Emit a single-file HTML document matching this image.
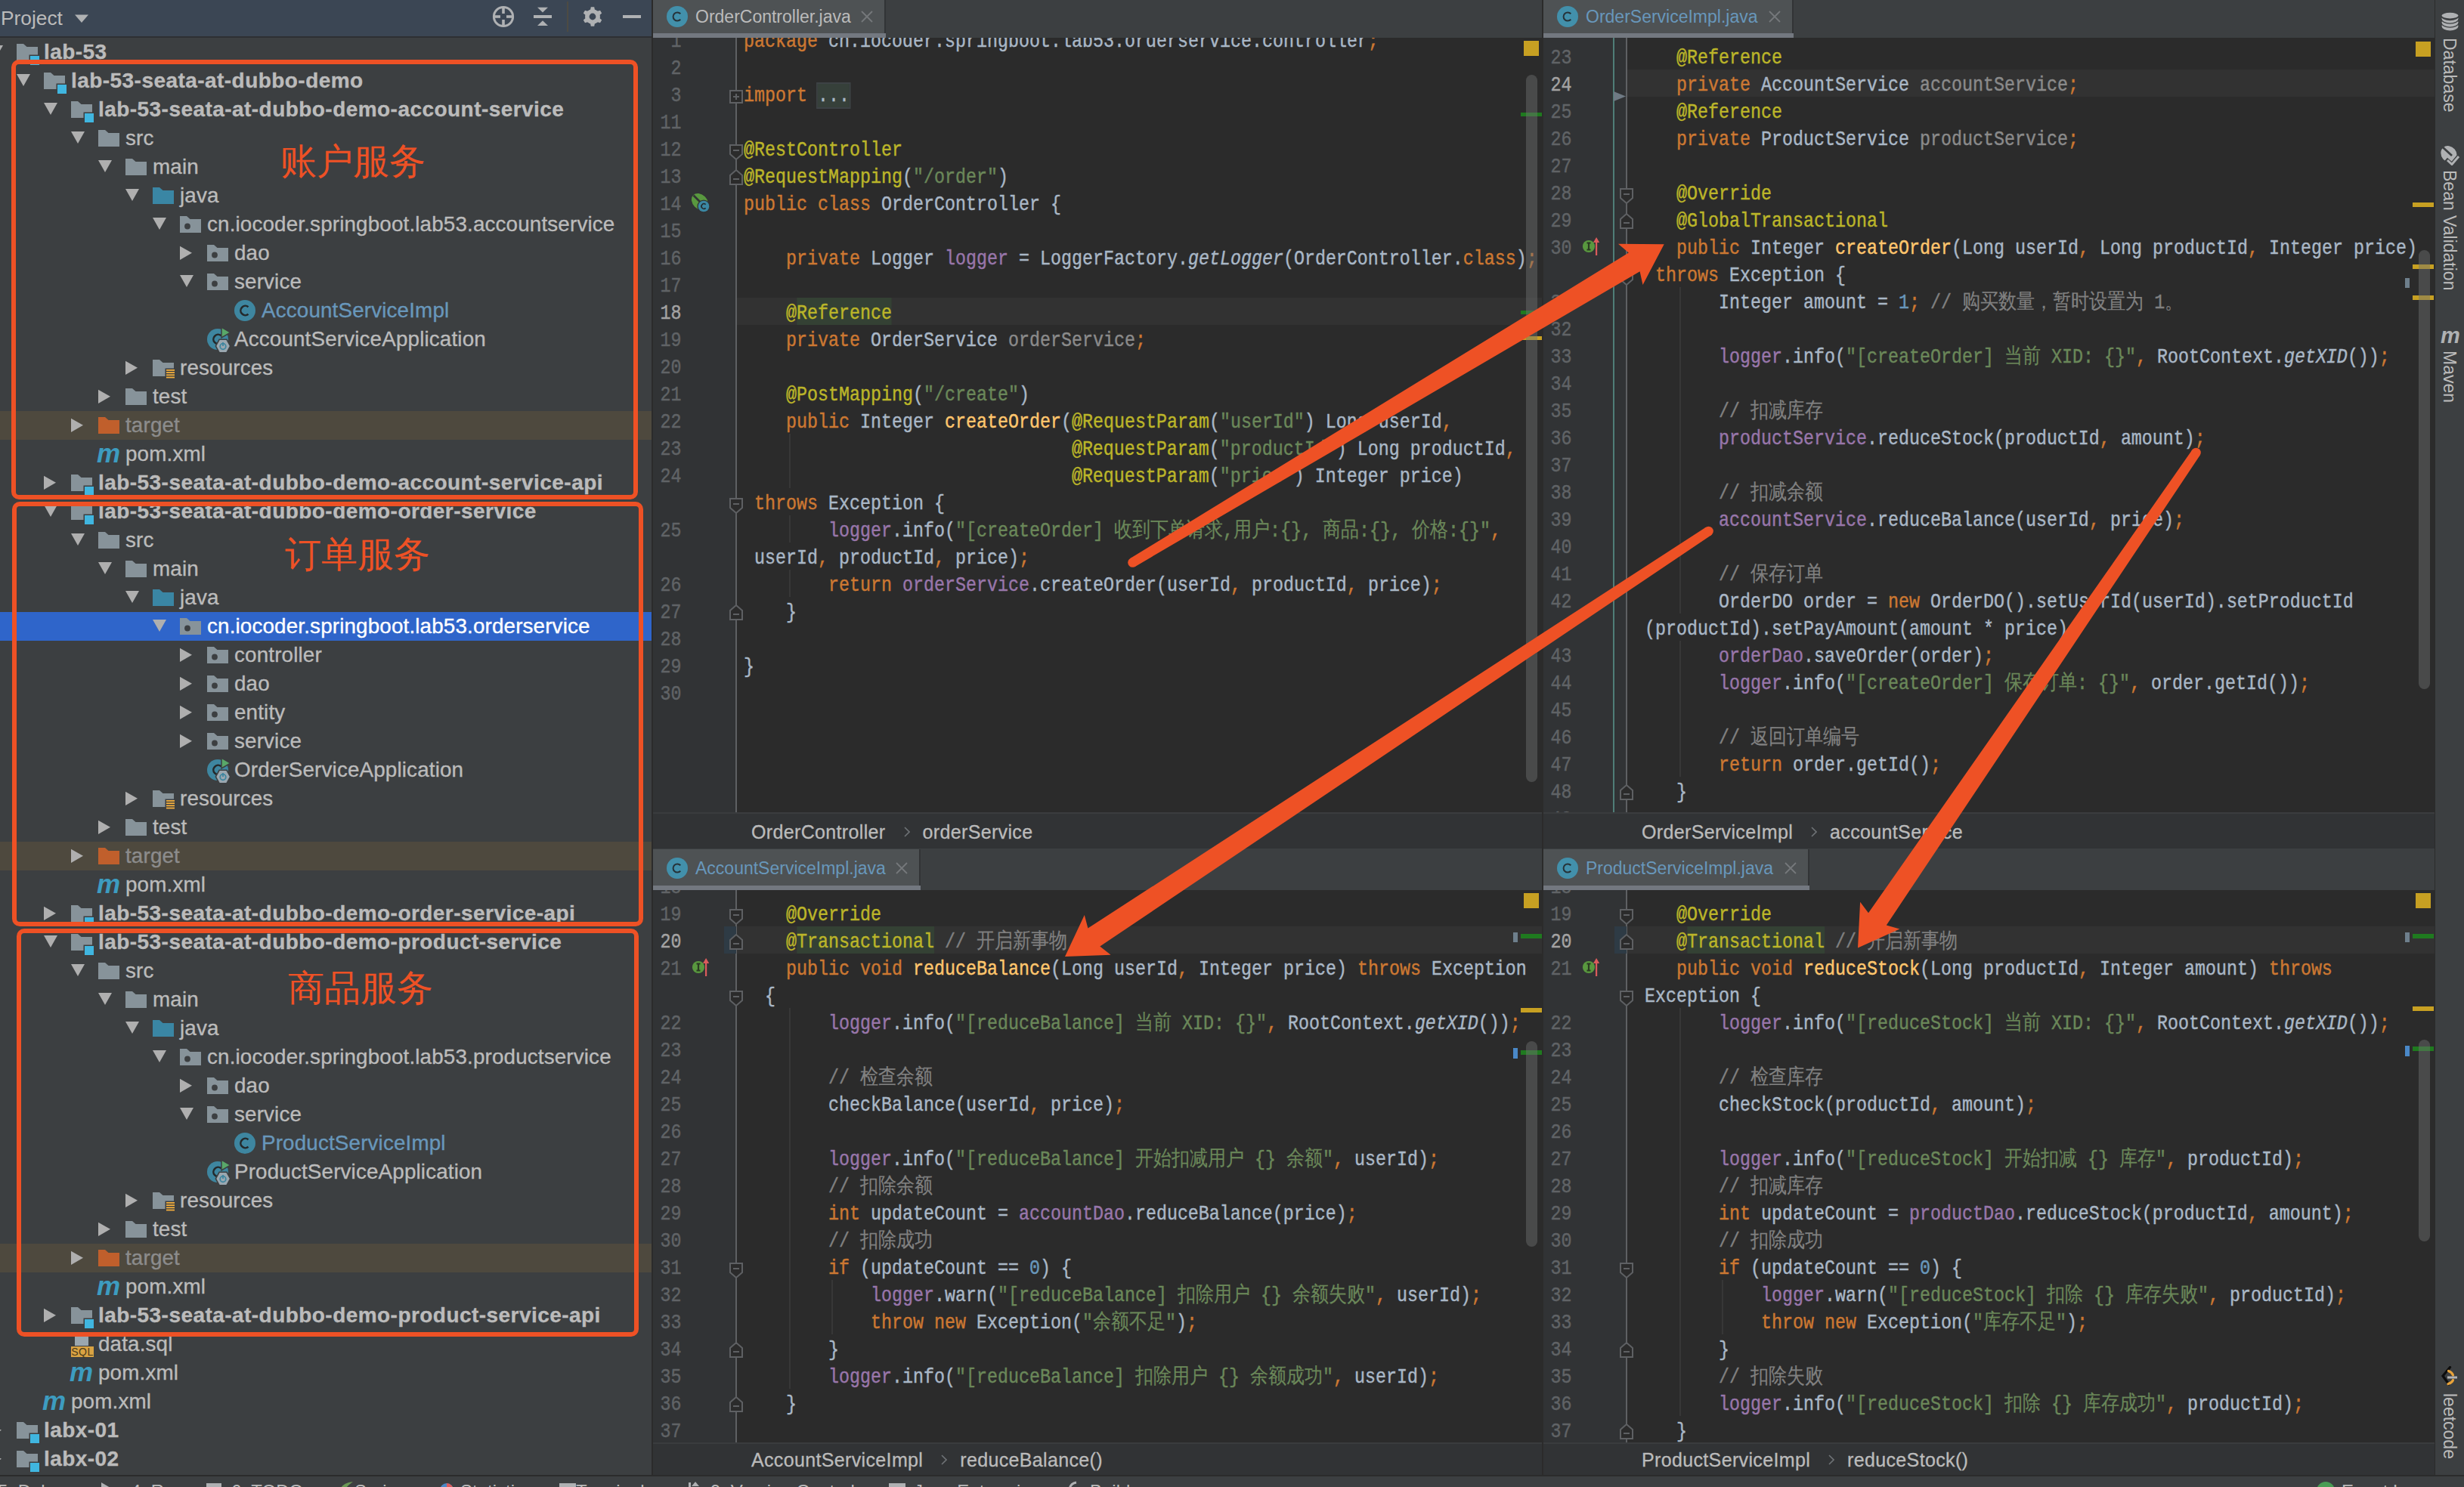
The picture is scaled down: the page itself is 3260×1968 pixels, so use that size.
<!DOCTYPE html><html><head><meta charset="utf-8"><style>
*{margin:0;padding:0;box-sizing:border-box}
html,body{width:3260px;height:1968px;overflow:hidden;background:#3c3f41}
body>div,body>svg,div>div,div>svg{position:absolute}
.t,.tb{font-family:'Liberation Sans',sans-serif;-webkit-text-stroke:0.35px currentColor;font-size:27.8px;letter-spacing:0.15px;line-height:38px;height:38px;white-space:pre}
.tb{font-weight:bold;font-size:28px;letter-spacing:0.45px}
.ui{font-family:'Liberation Sans',sans-serif;white-space:pre}
.crumb{-webkit-text-stroke:0.3px currentColor;font-size:25px;color:#bbbbbb;line-height:44px;letter-spacing:0.35px}
.code{font-family:'Liberation Mono',monospace;-webkit-text-stroke:0.45px currentColor;font-size:27.2px;line-height:36px;height:36px;white-space:pre;transform:scaleX(0.85784);transform-origin:0 0}
.ln{font-family:'Liberation Mono',monospace;-webkit-text-stroke:0.45px currentColor;font-size:27.2px;line-height:36px;height:36px;text-align:right;white-space:pre;transform:scaleX(0.85784);transform-origin:100% 0}
.cj{font-size:27.55px;-webkit-text-stroke:0.2px currentColor}
</style></head><body><div style="left:0px;top:0px;width:862px;height:1968px;background:#3c3f41;"></div>
<svg style="left:-14px;top:50px" width="20" height="38" viewBox="0 0 20 38"><path d="M0 10 H18 L9 26 Z" fill="#afafaf"/></svg>
<svg style="left:22px;top:50px" width="34" height="38" viewBox="0 0 34 38"><path d="M0 8 H9 L13.5 12 H28 V30 H0 Z" fill="#87939a"/><rect x="16.5" y="22.5" width="15" height="15" fill="#3c3f41"/><rect x="18" y="24" width="12" height="12" fill="#40b6e0"/></svg>
<div class="tb" style="left:58px;top:50px;color:#bbbbbb">lab-53</div>
<svg style="left:22px;top:88px" width="20" height="38" viewBox="0 0 20 38"><path d="M0 10 H18 L9 26 Z" fill="#afafaf"/></svg>
<svg style="left:58px;top:88px" width="34" height="38" viewBox="0 0 34 38"><path d="M0 8 H9 L13.5 12 H28 V30 H0 Z" fill="#87939a"/><rect x="16.5" y="22.5" width="15" height="15" fill="#3c3f41"/><rect x="18" y="24" width="12" height="12" fill="#40b6e0"/></svg>
<div class="tb" style="left:94px;top:88px;color:#bbbbbb">lab-53-seata-at-dubbo-demo</div>
<svg style="left:58px;top:126px" width="20" height="38" viewBox="0 0 20 38"><path d="M0 10 H18 L9 26 Z" fill="#afafaf"/></svg>
<svg style="left:94px;top:126px" width="34" height="38" viewBox="0 0 34 38"><path d="M0 8 H9 L13.5 12 H28 V30 H0 Z" fill="#87939a"/><rect x="16.5" y="22.5" width="15" height="15" fill="#3c3f41"/><rect x="18" y="24" width="12" height="12" fill="#40b6e0"/></svg>
<div class="tb" style="left:130px;top:126px;color:#bbbbbb">lab-53-seata-at-dubbo-demo-account-service</div>
<svg style="left:94px;top:164px" width="20" height="38" viewBox="0 0 20 38"><path d="M0 10 H18 L9 26 Z" fill="#afafaf"/></svg>
<svg style="left:130px;top:164px" width="34" height="38" viewBox="0 0 34 38"><path d="M0 8 H9 L13.5 12 H28 V30 H0 Z" fill="#87939a"/></svg>
<div class="t" style="left:166px;top:164px;color:#bbbbbb">src</div>
<svg style="left:130px;top:202px" width="20" height="38" viewBox="0 0 20 38"><path d="M0 10 H18 L9 26 Z" fill="#afafaf"/></svg>
<svg style="left:166px;top:202px" width="34" height="38" viewBox="0 0 34 38"><path d="M0 8 H9 L13.5 12 H28 V30 H0 Z" fill="#87939a"/></svg>
<div class="t" style="left:202px;top:202px;color:#bbbbbb">main</div>
<svg style="left:166px;top:240px" width="20" height="38" viewBox="0 0 20 38"><path d="M0 10 H18 L9 26 Z" fill="#afafaf"/></svg>
<svg style="left:202px;top:240px" width="34" height="38" viewBox="0 0 34 38"><path d="M0 8 H9 L13.5 12 H28 V30 H0 Z" fill="#3a86a4"/></svg>
<div class="t" style="left:238px;top:240px;color:#bbbbbb">java</div>
<svg style="left:202px;top:278px" width="20" height="38" viewBox="0 0 20 38"><path d="M0 10 H18 L9 26 Z" fill="#afafaf"/></svg>
<svg style="left:238px;top:278px" width="34" height="38" viewBox="0 0 34 38"><path d="M0 8 H9 L13.5 12 H28 V30 H0 Z" fill="#87939a"/><circle cx="10" cy="21.5" r="3.9" fill="#3c3f41"/></svg>
<div class="t" style="left:274px;top:278px;color:#bbbbbb">cn.iocoder.springboot.lab53.accountservice</div>
<svg style="left:238px;top:316px" width="20" height="38" viewBox="0 0 20 38"><path d="M0 9.7 L16 18.85 L0 28 Z" fill="#afafaf"/></svg>
<svg style="left:274px;top:316px" width="34" height="38" viewBox="0 0 34 38"><path d="M0 8 H9 L13.5 12 H28 V30 H0 Z" fill="#87939a"/><circle cx="10" cy="21.5" r="3.9" fill="#3c3f41"/></svg>
<div class="t" style="left:310px;top:316px;color:#bbbbbb">dao</div>
<svg style="left:238px;top:354px" width="20" height="38" viewBox="0 0 20 38"><path d="M0 10 H18 L9 26 Z" fill="#afafaf"/></svg>
<svg style="left:274px;top:354px" width="34" height="38" viewBox="0 0 34 38"><path d="M0 8 H9 L13.5 12 H28 V30 H0 Z" fill="#87939a"/><circle cx="10" cy="21.5" r="3.9" fill="#3c3f41"/></svg>
<div class="t" style="left:310px;top:354px;color:#bbbbbb">service</div>
<svg style="left:310px;top:392px" width="34" height="38" viewBox="0 0 34 38"><circle cx="14" cy="19" r="14" fill="#3e86a0"/><path d="M18.5 14.2 A6.2 6.2 0 1 0 18.5 23.8" fill="none" stroke="#24292b" stroke-width="2.6"/></svg>
<div class="t" style="left:346px;top:392px;color:#6897bb">AccountServiceImpl</div>
<svg style="left:274px;top:430px" width="34" height="38" viewBox="0 0 34 38"><circle cx="14" cy="19" r="14" fill="#3e86a0"/><path d="M18.5 14.2 A6.2 6.2 0 1 0 18.5 23.8" fill="none" stroke="#24292b" stroke-width="2.6"/><path d="M19 3 L31 10 L19 17 Z" fill="#59a869" stroke="#3c3f41" stroke-width="1.5"/><path d="M10.5 28 L15.7 18.5 H26.4 L31.5 28 L26.4 37.5 H15.7 Z" fill="#3c3f41"/><path d="M12.3 28 L16.7 20 H25.4 L29.8 28 L25.4 36 H16.7 Z" fill="#9aa7b0"/><circle cx="21" cy="28.5" r="3.8" fill="none" stroke="#3e86a0" stroke-width="1.8"/><rect x="20.1" y="23" width="1.8" height="5" fill="#3e86a0"/></svg>
<div class="t" style="left:310px;top:430px;color:#bbbbbb">AccountServiceApplication</div>
<svg style="left:166px;top:468px" width="20" height="38" viewBox="0 0 20 38"><path d="M0 9.7 L16 18.85 L0 28 Z" fill="#afafaf"/></svg>
<svg style="left:202px;top:468px" width="34" height="38" viewBox="0 0 34 38"><path d="M0 8 H9 L13.5 12 H28 V30 H0 Z" fill="#87939a"/><rect x="16.5" y="19.5" width="14" height="14" fill="#3c3f41"/><rect x="18" y="21.0" width="11" height="1.8" fill="#f4af3d"/><rect x="18" y="24.2" width="11" height="1.8" fill="#f4af3d"/><rect x="18" y="27.4" width="11" height="1.8" fill="#f4af3d"/><rect x="18" y="30.6" width="11" height="1.8" fill="#f4af3d"/></svg>
<div class="t" style="left:238px;top:468px;color:#bbbbbb">resources</div>
<svg style="left:130px;top:506px" width="20" height="38" viewBox="0 0 20 38"><path d="M0 9.7 L16 18.85 L0 28 Z" fill="#afafaf"/></svg>
<svg style="left:166px;top:506px" width="34" height="38" viewBox="0 0 34 38"><path d="M0 8 H9 L13.5 12 H28 V30 H0 Z" fill="#87939a"/></svg>
<div class="t" style="left:202px;top:506px;color:#bbbbbb">test</div>
<div style="left:0px;top:544px;width:862px;height:38px;background:#4e493e;"></div>
<svg style="left:94px;top:544px" width="20" height="38" viewBox="0 0 20 38"><path d="M0 9.7 L16 18.85 L0 28 Z" fill="#afafaf"/></svg>
<svg style="left:130px;top:544px" width="34" height="38" viewBox="0 0 34 38"><path d="M0 8 H9 L13.5 12 H28 V30 H0 Z" fill="#c05f2c"/></svg>
<div class="t" style="left:166px;top:544px;color:#8c8c8c">target</div>
<div style="left:128px;top:583px;font:italic bold 35px 'Liberation Sans';color:#3d9cc0;line-height:34px;letter-spacing:-1px">m</div>
<div class="t" style="left:166px;top:582px;color:#bbbbbb">pom.xml</div>
<svg style="left:58px;top:620px" width="20" height="38" viewBox="0 0 20 38"><path d="M0 9.7 L16 18.85 L0 28 Z" fill="#afafaf"/></svg>
<svg style="left:94px;top:620px" width="34" height="38" viewBox="0 0 34 38"><path d="M0 8 H9 L13.5 12 H28 V30 H0 Z" fill="#87939a"/><rect x="16.5" y="22.5" width="15" height="15" fill="#3c3f41"/><rect x="18" y="24" width="12" height="12" fill="#40b6e0"/></svg>
<div class="tb" style="left:130px;top:620px;color:#bbbbbb">lab-53-seata-at-dubbo-demo-account-service-api</div>
<svg style="left:58px;top:658px" width="20" height="38" viewBox="0 0 20 38"><path d="M0 10 H18 L9 26 Z" fill="#afafaf"/></svg>
<svg style="left:94px;top:658px" width="34" height="38" viewBox="0 0 34 38"><path d="M0 8 H9 L13.5 12 H28 V30 H0 Z" fill="#87939a"/><rect x="16.5" y="22.5" width="15" height="15" fill="#3c3f41"/><rect x="18" y="24" width="12" height="12" fill="#40b6e0"/></svg>
<div class="tb" style="left:130px;top:658px;color:#bbbbbb">lab-53-seata-at-dubbo-demo-order-service</div>
<svg style="left:94px;top:696px" width="20" height="38" viewBox="0 0 20 38"><path d="M0 10 H18 L9 26 Z" fill="#afafaf"/></svg>
<svg style="left:130px;top:696px" width="34" height="38" viewBox="0 0 34 38"><path d="M0 8 H9 L13.5 12 H28 V30 H0 Z" fill="#87939a"/></svg>
<div class="t" style="left:166px;top:696px;color:#bbbbbb">src</div>
<svg style="left:130px;top:734px" width="20" height="38" viewBox="0 0 20 38"><path d="M0 10 H18 L9 26 Z" fill="#afafaf"/></svg>
<svg style="left:166px;top:734px" width="34" height="38" viewBox="0 0 34 38"><path d="M0 8 H9 L13.5 12 H28 V30 H0 Z" fill="#87939a"/></svg>
<div class="t" style="left:202px;top:734px;color:#bbbbbb">main</div>
<svg style="left:166px;top:772px" width="20" height="38" viewBox="0 0 20 38"><path d="M0 10 H18 L9 26 Z" fill="#afafaf"/></svg>
<svg style="left:202px;top:772px" width="34" height="38" viewBox="0 0 34 38"><path d="M0 8 H9 L13.5 12 H28 V30 H0 Z" fill="#3a86a4"/></svg>
<div class="t" style="left:238px;top:772px;color:#bbbbbb">java</div>
<div style="left:0px;top:810px;width:862px;height:38px;background:#2f65ca;"></div>
<svg style="left:202px;top:810px" width="20" height="38" viewBox="0 0 20 38"><path d="M0 10 H18 L9 26 Z" fill="#afafaf"/></svg>
<svg style="left:238px;top:810px" width="34" height="38" viewBox="0 0 34 38"><path d="M0 8 H9 L13.5 12 H28 V30 H0 Z" fill="#87939a"/><circle cx="10" cy="21.5" r="3.9" fill="#3c3f41"/></svg>
<div class="t" style="left:274px;top:810px;color:#ffffff">cn.iocoder.springboot.lab53.orderservice</div>
<svg style="left:238px;top:848px" width="20" height="38" viewBox="0 0 20 38"><path d="M0 9.7 L16 18.85 L0 28 Z" fill="#afafaf"/></svg>
<svg style="left:274px;top:848px" width="34" height="38" viewBox="0 0 34 38"><path d="M0 8 H9 L13.5 12 H28 V30 H0 Z" fill="#87939a"/><circle cx="10" cy="21.5" r="3.9" fill="#3c3f41"/></svg>
<div class="t" style="left:310px;top:848px;color:#bbbbbb">controller</div>
<svg style="left:238px;top:886px" width="20" height="38" viewBox="0 0 20 38"><path d="M0 9.7 L16 18.85 L0 28 Z" fill="#afafaf"/></svg>
<svg style="left:274px;top:886px" width="34" height="38" viewBox="0 0 34 38"><path d="M0 8 H9 L13.5 12 H28 V30 H0 Z" fill="#87939a"/><circle cx="10" cy="21.5" r="3.9" fill="#3c3f41"/></svg>
<div class="t" style="left:310px;top:886px;color:#bbbbbb">dao</div>
<svg style="left:238px;top:924px" width="20" height="38" viewBox="0 0 20 38"><path d="M0 9.7 L16 18.85 L0 28 Z" fill="#afafaf"/></svg>
<svg style="left:274px;top:924px" width="34" height="38" viewBox="0 0 34 38"><path d="M0 8 H9 L13.5 12 H28 V30 H0 Z" fill="#87939a"/><circle cx="10" cy="21.5" r="3.9" fill="#3c3f41"/></svg>
<div class="t" style="left:310px;top:924px;color:#bbbbbb">entity</div>
<svg style="left:238px;top:962px" width="20" height="38" viewBox="0 0 20 38"><path d="M0 9.7 L16 18.85 L0 28 Z" fill="#afafaf"/></svg>
<svg style="left:274px;top:962px" width="34" height="38" viewBox="0 0 34 38"><path d="M0 8 H9 L13.5 12 H28 V30 H0 Z" fill="#87939a"/><circle cx="10" cy="21.5" r="3.9" fill="#3c3f41"/></svg>
<div class="t" style="left:310px;top:962px;color:#bbbbbb">service</div>
<svg style="left:274px;top:1000px" width="34" height="38" viewBox="0 0 34 38"><circle cx="14" cy="19" r="14" fill="#3e86a0"/><path d="M18.5 14.2 A6.2 6.2 0 1 0 18.5 23.8" fill="none" stroke="#24292b" stroke-width="2.6"/><path d="M19 3 L31 10 L19 17 Z" fill="#59a869" stroke="#3c3f41" stroke-width="1.5"/><path d="M10.5 28 L15.7 18.5 H26.4 L31.5 28 L26.4 37.5 H15.7 Z" fill="#3c3f41"/><path d="M12.3 28 L16.7 20 H25.4 L29.8 28 L25.4 36 H16.7 Z" fill="#9aa7b0"/><circle cx="21" cy="28.5" r="3.8" fill="none" stroke="#3e86a0" stroke-width="1.8"/><rect x="20.1" y="23" width="1.8" height="5" fill="#3e86a0"/></svg>
<div class="t" style="left:310px;top:1000px;color:#bbbbbb">OrderServiceApplication</div>
<svg style="left:166px;top:1038px" width="20" height="38" viewBox="0 0 20 38"><path d="M0 9.7 L16 18.85 L0 28 Z" fill="#afafaf"/></svg>
<svg style="left:202px;top:1038px" width="34" height="38" viewBox="0 0 34 38"><path d="M0 8 H9 L13.5 12 H28 V30 H0 Z" fill="#87939a"/><rect x="16.5" y="19.5" width="14" height="14" fill="#3c3f41"/><rect x="18" y="21.0" width="11" height="1.8" fill="#f4af3d"/><rect x="18" y="24.2" width="11" height="1.8" fill="#f4af3d"/><rect x="18" y="27.4" width="11" height="1.8" fill="#f4af3d"/><rect x="18" y="30.6" width="11" height="1.8" fill="#f4af3d"/></svg>
<div class="t" style="left:238px;top:1038px;color:#bbbbbb">resources</div>
<svg style="left:130px;top:1076px" width="20" height="38" viewBox="0 0 20 38"><path d="M0 9.7 L16 18.85 L0 28 Z" fill="#afafaf"/></svg>
<svg style="left:166px;top:1076px" width="34" height="38" viewBox="0 0 34 38"><path d="M0 8 H9 L13.5 12 H28 V30 H0 Z" fill="#87939a"/></svg>
<div class="t" style="left:202px;top:1076px;color:#bbbbbb">test</div>
<div style="left:0px;top:1114px;width:862px;height:38px;background:#4e493e;"></div>
<svg style="left:94px;top:1114px" width="20" height="38" viewBox="0 0 20 38"><path d="M0 9.7 L16 18.85 L0 28 Z" fill="#afafaf"/></svg>
<svg style="left:130px;top:1114px" width="34" height="38" viewBox="0 0 34 38"><path d="M0 8 H9 L13.5 12 H28 V30 H0 Z" fill="#c05f2c"/></svg>
<div class="t" style="left:166px;top:1114px;color:#8c8c8c">target</div>
<div style="left:128px;top:1153px;font:italic bold 35px 'Liberation Sans';color:#3d9cc0;line-height:34px;letter-spacing:-1px">m</div>
<div class="t" style="left:166px;top:1152px;color:#bbbbbb">pom.xml</div>
<svg style="left:58px;top:1190px" width="20" height="38" viewBox="0 0 20 38"><path d="M0 9.7 L16 18.85 L0 28 Z" fill="#afafaf"/></svg>
<svg style="left:94px;top:1190px" width="34" height="38" viewBox="0 0 34 38"><path d="M0 8 H9 L13.5 12 H28 V30 H0 Z" fill="#87939a"/><rect x="16.5" y="22.5" width="15" height="15" fill="#3c3f41"/><rect x="18" y="24" width="12" height="12" fill="#40b6e0"/></svg>
<div class="tb" style="left:130px;top:1190px;color:#bbbbbb">lab-53-seata-at-dubbo-demo-order-service-api</div>
<svg style="left:58px;top:1228px" width="20" height="38" viewBox="0 0 20 38"><path d="M0 10 H18 L9 26 Z" fill="#afafaf"/></svg>
<svg style="left:94px;top:1228px" width="34" height="38" viewBox="0 0 34 38"><path d="M0 8 H9 L13.5 12 H28 V30 H0 Z" fill="#87939a"/><rect x="16.5" y="22.5" width="15" height="15" fill="#3c3f41"/><rect x="18" y="24" width="12" height="12" fill="#40b6e0"/></svg>
<div class="tb" style="left:130px;top:1228px;color:#bbbbbb">lab-53-seata-at-dubbo-demo-product-service</div>
<svg style="left:94px;top:1266px" width="20" height="38" viewBox="0 0 20 38"><path d="M0 10 H18 L9 26 Z" fill="#afafaf"/></svg>
<svg style="left:130px;top:1266px" width="34" height="38" viewBox="0 0 34 38"><path d="M0 8 H9 L13.5 12 H28 V30 H0 Z" fill="#87939a"/></svg>
<div class="t" style="left:166px;top:1266px;color:#bbbbbb">src</div>
<svg style="left:130px;top:1304px" width="20" height="38" viewBox="0 0 20 38"><path d="M0 10 H18 L9 26 Z" fill="#afafaf"/></svg>
<svg style="left:166px;top:1304px" width="34" height="38" viewBox="0 0 34 38"><path d="M0 8 H9 L13.5 12 H28 V30 H0 Z" fill="#87939a"/></svg>
<div class="t" style="left:202px;top:1304px;color:#bbbbbb">main</div>
<svg style="left:166px;top:1342px" width="20" height="38" viewBox="0 0 20 38"><path d="M0 10 H18 L9 26 Z" fill="#afafaf"/></svg>
<svg style="left:202px;top:1342px" width="34" height="38" viewBox="0 0 34 38"><path d="M0 8 H9 L13.5 12 H28 V30 H0 Z" fill="#3a86a4"/></svg>
<div class="t" style="left:238px;top:1342px;color:#bbbbbb">java</div>
<svg style="left:202px;top:1380px" width="20" height="38" viewBox="0 0 20 38"><path d="M0 10 H18 L9 26 Z" fill="#afafaf"/></svg>
<svg style="left:238px;top:1380px" width="34" height="38" viewBox="0 0 34 38"><path d="M0 8 H9 L13.5 12 H28 V30 H0 Z" fill="#87939a"/><circle cx="10" cy="21.5" r="3.9" fill="#3c3f41"/></svg>
<div class="t" style="left:274px;top:1380px;color:#bbbbbb">cn.iocoder.springboot.lab53.productservice</div>
<svg style="left:238px;top:1418px" width="20" height="38" viewBox="0 0 20 38"><path d="M0 9.7 L16 18.85 L0 28 Z" fill="#afafaf"/></svg>
<svg style="left:274px;top:1418px" width="34" height="38" viewBox="0 0 34 38"><path d="M0 8 H9 L13.5 12 H28 V30 H0 Z" fill="#87939a"/><circle cx="10" cy="21.5" r="3.9" fill="#3c3f41"/></svg>
<div class="t" style="left:310px;top:1418px;color:#bbbbbb">dao</div>
<svg style="left:238px;top:1456px" width="20" height="38" viewBox="0 0 20 38"><path d="M0 10 H18 L9 26 Z" fill="#afafaf"/></svg>
<svg style="left:274px;top:1456px" width="34" height="38" viewBox="0 0 34 38"><path d="M0 8 H9 L13.5 12 H28 V30 H0 Z" fill="#87939a"/><circle cx="10" cy="21.5" r="3.9" fill="#3c3f41"/></svg>
<div class="t" style="left:310px;top:1456px;color:#bbbbbb">service</div>
<svg style="left:310px;top:1494px" width="34" height="38" viewBox="0 0 34 38"><circle cx="14" cy="19" r="14" fill="#3e86a0"/><path d="M18.5 14.2 A6.2 6.2 0 1 0 18.5 23.8" fill="none" stroke="#24292b" stroke-width="2.6"/></svg>
<div class="t" style="left:346px;top:1494px;color:#6897bb">ProductServiceImpl</div>
<svg style="left:274px;top:1532px" width="34" height="38" viewBox="0 0 34 38"><circle cx="14" cy="19" r="14" fill="#3e86a0"/><path d="M18.5 14.2 A6.2 6.2 0 1 0 18.5 23.8" fill="none" stroke="#24292b" stroke-width="2.6"/><path d="M19 3 L31 10 L19 17 Z" fill="#59a869" stroke="#3c3f41" stroke-width="1.5"/><path d="M10.5 28 L15.7 18.5 H26.4 L31.5 28 L26.4 37.5 H15.7 Z" fill="#3c3f41"/><path d="M12.3 28 L16.7 20 H25.4 L29.8 28 L25.4 36 H16.7 Z" fill="#9aa7b0"/><circle cx="21" cy="28.5" r="3.8" fill="none" stroke="#3e86a0" stroke-width="1.8"/><rect x="20.1" y="23" width="1.8" height="5" fill="#3e86a0"/></svg>
<div class="t" style="left:310px;top:1532px;color:#bbbbbb">ProductServiceApplication</div>
<svg style="left:166px;top:1570px" width="20" height="38" viewBox="0 0 20 38"><path d="M0 9.7 L16 18.85 L0 28 Z" fill="#afafaf"/></svg>
<svg style="left:202px;top:1570px" width="34" height="38" viewBox="0 0 34 38"><path d="M0 8 H9 L13.5 12 H28 V30 H0 Z" fill="#87939a"/><rect x="16.5" y="19.5" width="14" height="14" fill="#3c3f41"/><rect x="18" y="21.0" width="11" height="1.8" fill="#f4af3d"/><rect x="18" y="24.2" width="11" height="1.8" fill="#f4af3d"/><rect x="18" y="27.4" width="11" height="1.8" fill="#f4af3d"/><rect x="18" y="30.6" width="11" height="1.8" fill="#f4af3d"/></svg>
<div class="t" style="left:238px;top:1570px;color:#bbbbbb">resources</div>
<svg style="left:130px;top:1608px" width="20" height="38" viewBox="0 0 20 38"><path d="M0 9.7 L16 18.85 L0 28 Z" fill="#afafaf"/></svg>
<svg style="left:166px;top:1608px" width="34" height="38" viewBox="0 0 34 38"><path d="M0 8 H9 L13.5 12 H28 V30 H0 Z" fill="#87939a"/></svg>
<div class="t" style="left:202px;top:1608px;color:#bbbbbb">test</div>
<div style="left:0px;top:1646px;width:862px;height:38px;background:#4e493e;"></div>
<svg style="left:94px;top:1646px" width="20" height="38" viewBox="0 0 20 38"><path d="M0 9.7 L16 18.85 L0 28 Z" fill="#afafaf"/></svg>
<svg style="left:130px;top:1646px" width="34" height="38" viewBox="0 0 34 38"><path d="M0 8 H9 L13.5 12 H28 V30 H0 Z" fill="#c05f2c"/></svg>
<div class="t" style="left:166px;top:1646px;color:#8c8c8c">target</div>
<div style="left:128px;top:1685px;font:italic bold 35px 'Liberation Sans';color:#3d9cc0;line-height:34px;letter-spacing:-1px">m</div>
<div class="t" style="left:166px;top:1684px;color:#bbbbbb">pom.xml</div>
<svg style="left:58px;top:1722px" width="20" height="38" viewBox="0 0 20 38"><path d="M0 9.7 L16 18.85 L0 28 Z" fill="#afafaf"/></svg>
<svg style="left:94px;top:1722px" width="34" height="38" viewBox="0 0 34 38"><path d="M0 8 H9 L13.5 12 H28 V30 H0 Z" fill="#87939a"/><rect x="16.5" y="22.5" width="15" height="15" fill="#3c3f41"/><rect x="18" y="24" width="12" height="12" fill="#40b6e0"/></svg>
<div class="tb" style="left:130px;top:1722px;color:#bbbbbb">lab-53-seata-at-dubbo-demo-product-service-api</div>
<svg style="left:94px;top:1760px" width="34" height="38" viewBox="0 0 34 38"><path d="M10 4 H23 V21 H5 V9 Z" fill="#9aa7b0"/><path d="M5 9 L10 4 L10 9 Z" fill="#3c3f41"/><rect x="0" y="22" width="30" height="14" fill="#d9a343"/><text x="15" y="34" text-anchor="middle" font-family="Liberation Sans" font-size="14" letter-spacing="0.5" fill="#4a3a1c">SQL</text></svg>
<div class="t" style="left:130px;top:1760px;color:#bbbbbb">data.sql</div>
<div style="left:92px;top:1799px;font:italic bold 35px 'Liberation Sans';color:#3d9cc0;line-height:34px;letter-spacing:-1px">m</div>
<div class="t" style="left:130px;top:1798px;color:#bbbbbb">pom.xml</div>
<div style="left:56px;top:1837px;font:italic bold 35px 'Liberation Sans';color:#3d9cc0;line-height:34px;letter-spacing:-1px">m</div>
<div class="t" style="left:94px;top:1836px;color:#bbbbbb">pom.xml</div>
<svg style="left:-14px;top:1874px" width="20" height="38" viewBox="0 0 20 38"><path d="M0 9.7 L16 18.85 L0 28 Z" fill="#afafaf"/></svg>
<svg style="left:22px;top:1874px" width="34" height="38" viewBox="0 0 34 38"><path d="M0 8 H9 L13.5 12 H28 V30 H0 Z" fill="#87939a"/><rect x="16.5" y="22.5" width="15" height="15" fill="#3c3f41"/><rect x="18" y="24" width="12" height="12" fill="#40b6e0"/></svg>
<div class="tb" style="left:58px;top:1874px;color:#bbbbbb">labx-01</div>
<svg style="left:-14px;top:1912px" width="20" height="38" viewBox="0 0 20 38"><path d="M0 9.7 L16 18.85 L0 28 Z" fill="#afafaf"/></svg>
<svg style="left:22px;top:1912px" width="34" height="38" viewBox="0 0 34 38"><path d="M0 8 H9 L13.5 12 H28 V30 H0 Z" fill="#87939a"/><rect x="16.5" y="22.5" width="15" height="15" fill="#3c3f41"/><rect x="18" y="24" width="12" height="12" fill="#40b6e0"/></svg>
<div class="tb" style="left:58px;top:1912px;color:#bbbbbb">labx-02</div>
<div style="left:0px;top:0px;width:862px;height:48px;background:#3b4654;"></div>
<div style="left:0px;top:48px;width:862px;height:2px;background:#2e3033;"></div>
<div class="ui" style="left:1px;top:5px;font-size:26.3px;color:#bbbbbb;line-height:38px">Project</div>
<svg style="left:99px;top:19px" width="19" height="12" viewBox="0 0 19 12"><path d="M0 0.5 H18 L9 11 Z" fill="#afb1b3"/></svg>
<svg style="left:650px;top:6px" width="32" height="32" viewBox="0 0 32 32"><circle cx="16" cy="16" r="12.6" fill="none" stroke="#afb1b3" stroke-width="3"/><rect x="14.2" y="4.5" width="3.6" height="7.5" fill="#afb1b3"/><rect x="14.2" y="20" width="3.6" height="7.5" fill="#afb1b3"/><rect x="2.5" y="14.2" width="9.5" height="3.6" fill="#afb1b3"/><rect x="20" y="14.2" width="9.5" height="3.6" fill="#afb1b3"/></svg>
<svg style="left:704px;top:6px" width="28" height="32" viewBox="0 0 28 32"><path d="M7 3.7 H21 L14 10.6 Z" fill="#afb1b3"/><rect x="2" y="14" width="24" height="4" fill="#afb1b3"/><path d="M7 28 H21 L14 21.3 Z" fill="#afb1b3"/></svg>
<div style="left:750px;top:2px;width:2px;height:40px;background:#4d4b43;"></div>
<svg style="left:768px;top:6px" width="32" height="32" viewBox="0 0 32 32"><path d="M13.10 6.64 L13.80 3.19 L18.20 3.19 L18.90 6.64 L22.66 8.81 L26.00 7.69 L28.20 11.50 L25.56 13.83 L25.56 18.17 L28.20 20.50 L26.00 24.31 L22.66 23.19 L18.90 25.36 L18.20 28.81 L13.80 28.81 L13.10 25.36 L9.34 23.19 L6.00 24.31 L3.80 20.50 L6.44 18.17 L6.44 13.83 L3.80 11.50 L6.00 7.69 L9.34 8.81 Z" fill="#afb1b3"/><circle cx="16" cy="16" r="9.8" fill="#afb1b3"/><circle cx="16" cy="16" r="4.4" fill="#3b4654"/></svg>
<div style="left:824px;top:20px;width:24px;height:4px;background:#afb1b3;"></div>
<div style="left:862px;top:0px;width:2px;height:1968px;background:#2b2b2b;"></div>
<div style="left:864px;top:0px;width:1176px;height:50px;background:#3c3f41;"></div>
<div style="left:864px;top:0px;width:306px;height:44px;background:#4e5254;"></div>
<div style="left:864px;top:44px;width:308px;height:6px;background:#737880;"></div>
<div style="left:1170px;top:0px;width:2px;height:44px;background:#323436;"></div>
<svg style="left:882px;top:8px" width="28" height="28" viewBox="0 0 28 28"><circle cx="14" cy="14" r="14" fill="#4290ab"/><path d="M18.3 10.2 A5.6 5.6 0 1 0 18.3 17.8" fill="none" stroke="#263238" stroke-width="2"/></svg>
<div class="ui" style="left:920px;top:3px;font-size:23px;color:#bbbbbb;line-height:38px">OrderController.java</div>
<svg style="left:1139px;top:14px" width="16" height="16" viewBox="0 0 16 16"><path d="M1 1 L15 15 M15 1 L1 15" stroke="#75787b" stroke-width="1.8"/></svg>
<div style="left:864px;top:50px;width:1176px;height:1025px;background:#2b2b2b;"></div>
<div style="left:864px;top:50px;width:111px;height:1025px;background:#313335;"></div>
<div style="left:864px;top:50px;width:1176px;height:1025px;overflow:hidden"><div class="ln" style="left:0px;top:-13px;width:37.5px;color:#606366">1</div><div class="code" style="left:119.6px;top:-13px"><span style="color:#cc7832">package</span><span style="color:#a9b7c6"> </span><span style="color:#a9b7c6">cn</span><span style="color:#a9b7c6">.</span><span style="color:#a9b7c6">iocoder</span><span style="color:#a9b7c6">.</span><span style="color:#a9b7c6">springboot</span><span style="color:#a9b7c6">.</span><span style="color:#a9b7c6">lab53</span><span style="color:#a9b7c6">.</span><span style="color:#a9b7c6">orderservice</span><span style="color:#a9b7c6">.</span><span style="color:#a9b7c6">controller</span><span style="color:#cc7832">;</span></div><div class="ln" style="left:0px;top:23px;width:37.5px;color:#606366">2</div><div class="ln" style="left:0px;top:59px;width:37.5px;color:#606366">3</div><div class="code" style="left:119.6px;top:59px"><span style="color:#cc7832">import</span><span style="color:#a9b7c6"> </span><span style="color:#a9b7c6;background:#36403a;outline:2px solid #3d4245">...</span></div><div class="ln" style="left:0px;top:95px;width:37.5px;color:#606366">11</div><div class="ln" style="left:0px;top:131px;width:37.5px;color:#606366">12</div><div class="code" style="left:119.6px;top:131px"><span style="color:#bbb529">@RestController</span></div><div class="ln" style="left:0px;top:167px;width:37.5px;color:#606366">13</div><div class="code" style="left:119.6px;top:167px"><span style="color:#bbb529">@RequestMapping</span><span style="color:#a9b7c6">(</span><span style="color:#6a8759">"/order"</span><span style="color:#a9b7c6">)</span></div><div class="ln" style="left:0px;top:203px;width:37.5px;color:#606366">14</div><div class="code" style="left:119.6px;top:203px"><span style="color:#cc7832">public</span><span style="color:#a9b7c6"> </span><span style="color:#cc7832">class</span><span style="color:#a9b7c6"> </span><span style="color:#a9b7c6">OrderController</span><span style="color:#a9b7c6"> {</span></div><div class="ln" style="left:0px;top:239px;width:37.5px;color:#606366">15</div><div class="ln" style="left:0px;top:275px;width:37.5px;color:#606366">16</div><div class="code" style="left:119.6px;top:275px"><span style="color:#a9b7c6">    </span><span style="color:#cc7832">private</span><span style="color:#a9b7c6"> </span><span style="color:#a9b7c6">Logger</span><span style="color:#a9b7c6"> </span><span style="color:#9876aa">logger</span><span style="color:#a9b7c6"> = </span><span style="color:#a9b7c6">LoggerFactory</span><span style="color:#a9b7c6">.</span><span style="color:#a9b7c6;font-style:italic">getLogger</span><span style="color:#a9b7c6">(</span><span style="color:#a9b7c6">OrderController</span><span style="color:#a9b7c6">.</span><span style="color:#cc7832">class</span><span style="color:#a9b7c6">)</span><span style="color:#cc7832">;</span></div><div class="ln" style="left:0px;top:311px;width:37.5px;color:#606366">17</div><div style="left:111px;top:344px;width:1065px;height:36px;background:#323232"></div><div class="ln" style="left:0px;top:347px;width:37.5px;color:#a4a3a3">18</div><div class="code" style="left:119.6px;top:347px"><span style="color:#a9b7c6">    </span><span style="color:#bbb529">@</span><span style="color:#bbb529;background:#344134;display:inline-block;height:36px;vertical-align:top;margin-top:-3px;padding-top:3px">Reference</span></div><div class="ln" style="left:0px;top:383px;width:37.5px;color:#606366">19</div><div class="code" style="left:119.6px;top:383px"><span style="color:#a9b7c6">    </span><span style="color:#cc7832">private</span><span style="color:#a9b7c6"> </span><span style="color:#a9b7c6">OrderService</span><span style="color:#a9b7c6"> </span><span style="color:#8a8a8a">orderService</span><span style="color:#cc7832">;</span></div><div class="ln" style="left:0px;top:419px;width:37.5px;color:#606366">20</div><div class="ln" style="left:0px;top:455px;width:37.5px;color:#606366">21</div><div class="code" style="left:119.6px;top:455px"><span style="color:#a9b7c6">    </span><span style="color:#bbb529">@PostMapping</span><span style="color:#a9b7c6">(</span><span style="color:#6a8759">"/create"</span><span style="color:#a9b7c6">)</span></div><div class="ln" style="left:0px;top:491px;width:37.5px;color:#606366">22</div><div class="code" style="left:119.6px;top:491px"><span style="color:#a9b7c6">    </span><span style="color:#cc7832">public</span><span style="color:#a9b7c6"> </span><span style="color:#a9b7c6">Integer</span><span style="color:#a9b7c6"> </span><span style="color:#ffc66d">createOrder</span><span style="color:#a9b7c6">(</span><span style="color:#bbb529">@RequestParam</span><span style="color:#a9b7c6">(</span><span style="color:#6a8759">"userId"</span><span style="color:#a9b7c6">) </span><span style="color:#a9b7c6">Long</span><span style="color:#a9b7c6"> </span><span style="color:#a9b7c6">userId</span><span style="color:#cc7832">,</span></div><div class="ln" style="left:0px;top:527px;width:37.5px;color:#606366">23</div><div class="code" style="left:119.6px;top:527px"><span style="color:#a9b7c6">                               </span><span style="color:#bbb529">@RequestParam</span><span style="color:#a9b7c6">(</span><span style="color:#6a8759">"productId"</span><span style="color:#a9b7c6">) </span><span style="color:#a9b7c6">Long</span><span style="color:#a9b7c6"> </span><span style="color:#a9b7c6">productId</span><span style="color:#cc7832">,</span></div><div class="ln" style="left:0px;top:563px;width:37.5px;color:#606366">24</div><div class="code" style="left:119.6px;top:563px"><span style="color:#a9b7c6">                               </span><span style="color:#bbb529">@RequestParam</span><span style="color:#a9b7c6">(</span><span style="color:#6a8759">"price"</span><span style="color:#a9b7c6">) </span><span style="color:#a9b7c6">Integer</span><span style="color:#a9b7c6"> </span><span style="color:#a9b7c6">price</span><span style="color:#a9b7c6">)</span></div><div class="code" style="left:119.6px;top:599px"><span style="color:#a9b7c6"> </span><span style="color:#cc7832">throws</span><span style="color:#a9b7c6"> </span><span style="color:#a9b7c6">Exception</span><span style="color:#a9b7c6"> {</span></div><div class="ln" style="left:0px;top:635px;width:37.5px;color:#606366">25</div><div class="code" style="left:119.6px;top:635px"><span style="color:#a9b7c6">        </span><span style="color:#9876aa">logger</span><span style="color:#a9b7c6">.</span><span style="color:#a9b7c6">info</span><span style="color:#a9b7c6">(</span><span style="color:#6a8759">"[createOrder] <span class="cj">收到下单请求</span>,<span class="cj">用户</span>:{}, <span class="cj">商品</span>:{}, <span class="cj">价格</span>:{}"</span><span style="color:#cc7832">,</span></div><div class="code" style="left:119.6px;top:671px"><span style="color:#a9b7c6"> </span><span style="color:#a9b7c6">userId</span><span style="color:#cc7832">,</span><span style="color:#a9b7c6"> </span><span style="color:#a9b7c6">productId</span><span style="color:#cc7832">,</span><span style="color:#a9b7c6"> </span><span style="color:#a9b7c6">price</span><span style="color:#a9b7c6">)</span><span style="color:#cc7832">;</span></div><div class="ln" style="left:0px;top:707px;width:37.5px;color:#606366">26</div><div class="code" style="left:119.6px;top:707px"><span style="color:#a9b7c6">        </span><span style="color:#cc7832">return</span><span style="color:#a9b7c6"> </span><span style="color:#9876aa">orderService</span><span style="color:#a9b7c6">.</span><span style="color:#a9b7c6">createOrder</span><span style="color:#a9b7c6">(</span><span style="color:#a9b7c6">userId</span><span style="color:#cc7832">,</span><span style="color:#a9b7c6"> </span><span style="color:#a9b7c6">productId</span><span style="color:#cc7832">,</span><span style="color:#a9b7c6"> </span><span style="color:#a9b7c6">price</span><span style="color:#a9b7c6">)</span><span style="color:#cc7832">;</span></div><div class="ln" style="left:0px;top:743px;width:37.5px;color:#606366">27</div><div class="code" style="left:119.6px;top:743px"><span style="color:#a9b7c6">    }</span></div><div class="ln" style="left:0px;top:779px;width:37.5px;color:#606366">28</div><div class="ln" style="left:0px;top:815px;width:37.5px;color:#606366">29</div><div class="code" style="left:119.6px;top:815px"><span style="color:#a9b7c6">}</span></div><div class="ln" style="left:0px;top:851px;width:37.5px;color:#606366">30</div></div>
<div style="left:864px;top:1075px;width:1176px;height:2px;background:#3a3c3e;"></div>
<div style="left:864px;top:1077px;width:1176px;height:46px;background:#313335;"></div>
<div class="ui crumb" style="left:994px;top:1079px;display:flex;align-items:center">OrderController<svg style="position:static;margin-left:24px;margin-right:17px" width="8" height="14" viewBox="0 0 8 14"><path d="M1 1 L7 7 L1 13" fill="none" stroke="#6e7276" stroke-width="1.6"/></svg>orderService</div>
<div style="left:2040px;top:0px;width:2px;height:1123px;background:#2b2b2b;"></div>
<div style="left:2042px;top:0px;width:1179px;height:50px;background:#3c3f41;"></div>
<div style="left:2042px;top:0px;width:329px;height:44px;background:#4e5254;"></div>
<div style="left:2042px;top:44px;width:331px;height:6px;background:#737880;"></div>
<div style="left:2371px;top:0px;width:2px;height:44px;background:#323436;"></div>
<svg style="left:2060px;top:8px" width="28" height="28" viewBox="0 0 28 28"><circle cx="14" cy="14" r="14" fill="#4290ab"/><path d="M18.3 10.2 A5.6 5.6 0 1 0 18.3 17.8" fill="none" stroke="#263238" stroke-width="2"/></svg>
<div class="ui" style="left:2098px;top:3px;font-size:23px;color:#6897bb;line-height:38px">OrderServiceImpl.java</div>
<svg style="left:2340px;top:14px" width="16" height="16" viewBox="0 0 16 16"><path d="M1 1 L15 15 M15 1 L1 15" stroke="#75787b" stroke-width="1.8"/></svg>
<div style="left:2042px;top:50px;width:1179px;height:1025px;background:#2b2b2b;"></div>
<div style="left:2042px;top:50px;width:111px;height:1025px;background:#313335;"></div>
<div style="left:2042px;top:50px;width:1179px;height:1025px;overflow:hidden"><div class="ln" style="left:0px;top:9px;width:37.5px;color:#606366">23</div><div class="code" style="left:119.6px;top:9px"><span style="color:#a9b7c6">    </span><span style="color:#bbb529">@Reference</span></div><div style="left:111px;top:42px;width:1068px;height:36px;background:#323232"></div><div class="ln" style="left:0px;top:45px;width:37.5px;color:#a4a3a3">24</div><div class="code" style="left:119.6px;top:45px"><span style="color:#a9b7c6">    </span><span style="color:#cc7832">private</span><span style="color:#a9b7c6"> </span><span style="color:#a9b7c6">AccountService</span><span style="color:#a9b7c6"> </span><span style="color:#8a8a8a">accountService</span><span style="color:#cc7832">;</span></div><div class="ln" style="left:0px;top:81px;width:37.5px;color:#606366">25</div><div class="code" style="left:119.6px;top:81px"><span style="color:#a9b7c6">    </span><span style="color:#bbb529">@Reference</span></div><div class="ln" style="left:0px;top:117px;width:37.5px;color:#606366">26</div><div class="code" style="left:119.6px;top:117px"><span style="color:#a9b7c6">    </span><span style="color:#cc7832">private</span><span style="color:#a9b7c6"> </span><span style="color:#a9b7c6">ProductService</span><span style="color:#a9b7c6"> </span><span style="color:#8a8a8a">productService</span><span style="color:#cc7832">;</span></div><div class="ln" style="left:0px;top:153px;width:37.5px;color:#606366">27</div><div class="ln" style="left:0px;top:189px;width:37.5px;color:#606366">28</div><div class="code" style="left:119.6px;top:189px"><span style="color:#a9b7c6">    </span><span style="color:#bbb529">@Override</span></div><div class="ln" style="left:0px;top:225px;width:37.5px;color:#606366">29</div><div class="code" style="left:119.6px;top:225px"><span style="color:#a9b7c6">    </span><span style="color:#bbb529">@GlobalTransactional</span></div><div class="ln" style="left:0px;top:261px;width:37.5px;color:#606366">30</div><div class="code" style="left:119.6px;top:261px"><span style="color:#a9b7c6">    </span><span style="color:#cc7832">public</span><span style="color:#a9b7c6"> </span><span style="color:#a9b7c6">Integer</span><span style="color:#a9b7c6"> </span><span style="color:#ffc66d">createOrder</span><span style="color:#a9b7c6">(</span><span style="color:#a9b7c6">Long</span><span style="color:#a9b7c6"> </span><span style="color:#a9b7c6">userId</span><span style="color:#cc7832">,</span><span style="color:#a9b7c6"> </span><span style="color:#a9b7c6">Long</span><span style="color:#a9b7c6"> </span><span style="color:#a9b7c6">productId</span><span style="color:#cc7832">,</span><span style="color:#a9b7c6"> </span><span style="color:#a9b7c6">Integer</span><span style="color:#a9b7c6"> </span><span style="color:#a9b7c6">price</span><span style="color:#a9b7c6">)</span></div><div class="code" style="left:119.6px;top:297px"><span style="color:#a9b7c6">  </span><span style="color:#cc7832">throws</span><span style="color:#a9b7c6"> </span><span style="color:#a9b7c6">Exception</span><span style="color:#a9b7c6"> {</span></div><div class="ln" style="left:0px;top:333px;width:37.5px;color:#606366">31</div><div class="code" style="left:119.6px;top:333px"><span style="color:#a9b7c6">        </span><span style="color:#a9b7c6">Integer</span><span style="color:#a9b7c6"> </span><span style="color:#a9b7c6">amount</span><span style="color:#a9b7c6"> = </span><span style="color:#6897bb">1</span><span style="color:#cc7832">;</span><span style="color:#a9b7c6"> </span><span style="color:#808080">// <span class="cj">购买数量，暂时设置为</span> 1<span class="cj">。</span></span></div><div class="ln" style="left:0px;top:369px;width:37.5px;color:#606366">32</div><div class="ln" style="left:0px;top:405px;width:37.5px;color:#606366">33</div><div class="code" style="left:119.6px;top:405px"><span style="color:#a9b7c6">        </span><span style="color:#9876aa">logger</span><span style="color:#a9b7c6">.</span><span style="color:#a9b7c6">info</span><span style="color:#a9b7c6">(</span><span style="color:#6a8759">"[createOrder] <span class="cj">当前</span> XID: {}"</span><span style="color:#cc7832">,</span><span style="color:#a9b7c6"> </span><span style="color:#a9b7c6">RootContext</span><span style="color:#a9b7c6">.</span><span style="color:#a9b7c6;font-style:italic">getXID</span><span style="color:#a9b7c6">())</span><span style="color:#cc7832">;</span></div><div class="ln" style="left:0px;top:441px;width:37.5px;color:#606366">34</div><div class="ln" style="left:0px;top:477px;width:37.5px;color:#606366">35</div><div class="code" style="left:119.6px;top:477px"><span style="color:#a9b7c6">        </span><span style="color:#808080">// <span class="cj">扣减库存</span></span></div><div class="ln" style="left:0px;top:513px;width:37.5px;color:#606366">36</div><div class="code" style="left:119.6px;top:513px"><span style="color:#a9b7c6">        </span><span style="color:#9876aa">productService</span><span style="color:#a9b7c6">.</span><span style="color:#a9b7c6">reduceStock</span><span style="color:#a9b7c6">(</span><span style="color:#a9b7c6">productId</span><span style="color:#cc7832">,</span><span style="color:#a9b7c6"> </span><span style="color:#a9b7c6">amount</span><span style="color:#a9b7c6">)</span><span style="color:#cc7832">;</span></div><div class="ln" style="left:0px;top:549px;width:37.5px;color:#606366">37</div><div class="ln" style="left:0px;top:585px;width:37.5px;color:#606366">38</div><div class="code" style="left:119.6px;top:585px"><span style="color:#a9b7c6">        </span><span style="color:#808080">// <span class="cj">扣减余额</span></span></div><div class="ln" style="left:0px;top:621px;width:37.5px;color:#606366">39</div><div class="code" style="left:119.6px;top:621px"><span style="color:#a9b7c6">        </span><span style="color:#9876aa">accountService</span><span style="color:#a9b7c6">.</span><span style="color:#a9b7c6">reduceBalance</span><span style="color:#a9b7c6">(</span><span style="color:#a9b7c6">userId</span><span style="color:#cc7832">,</span><span style="color:#a9b7c6"> </span><span style="color:#a9b7c6">price</span><span style="color:#a9b7c6">)</span><span style="color:#cc7832">;</span></div><div class="ln" style="left:0px;top:657px;width:37.5px;color:#606366">40</div><div class="ln" style="left:0px;top:693px;width:37.5px;color:#606366">41</div><div class="code" style="left:119.6px;top:693px"><span style="color:#a9b7c6">        </span><span style="color:#808080">// <span class="cj">保存订单</span></span></div><div class="ln" style="left:0px;top:729px;width:37.5px;color:#606366">42</div><div class="code" style="left:119.6px;top:729px"><span style="color:#a9b7c6">        </span><span style="color:#a9b7c6">OrderDO</span><span style="color:#a9b7c6"> </span><span style="color:#a9b7c6">order</span><span style="color:#a9b7c6"> = </span><span style="color:#cc7832">new</span><span style="color:#a9b7c6"> </span><span style="color:#a9b7c6">OrderDO</span><span style="color:#a9b7c6">().</span><span style="color:#a9b7c6">setUserId</span><span style="color:#a9b7c6">(</span><span style="color:#a9b7c6">userId</span><span style="color:#a9b7c6">).</span><span style="color:#a9b7c6">setProductId</span></div><div class="code" style="left:119.6px;top:765px"><span style="color:#a9b7c6"> (</span><span style="color:#a9b7c6">productId</span><span style="color:#a9b7c6">).</span><span style="color:#a9b7c6">setPayAmount</span><span style="color:#a9b7c6">(</span><span style="color:#a9b7c6">amount</span><span style="color:#a9b7c6"> * </span><span style="color:#a9b7c6">price</span><span style="color:#a9b7c6">)</span><span style="color:#cc7832">;</span></div><div class="ln" style="left:0px;top:801px;width:37.5px;color:#606366">43</div><div class="code" style="left:119.6px;top:801px"><span style="color:#a9b7c6">        </span><span style="color:#9876aa">orderDao</span><span style="color:#a9b7c6">.</span><span style="color:#a9b7c6">saveOrder</span><span style="color:#a9b7c6">(</span><span style="color:#a9b7c6">order</span><span style="color:#a9b7c6">)</span><span style="color:#cc7832">;</span></div><div class="ln" style="left:0px;top:837px;width:37.5px;color:#606366">44</div><div class="code" style="left:119.6px;top:837px"><span style="color:#a9b7c6">        </span><span style="color:#9876aa">logger</span><span style="color:#a9b7c6">.</span><span style="color:#a9b7c6">info</span><span style="color:#a9b7c6">(</span><span style="color:#6a8759">"[createOrder] <span class="cj">保存订单</span>: {}"</span><span style="color:#cc7832">,</span><span style="color:#a9b7c6"> </span><span style="color:#a9b7c6">order</span><span style="color:#a9b7c6">.</span><span style="color:#a9b7c6">getId</span><span style="color:#a9b7c6">())</span><span style="color:#cc7832">;</span></div><div class="ln" style="left:0px;top:873px;width:37.5px;color:#606366">45</div><div class="ln" style="left:0px;top:909px;width:37.5px;color:#606366">46</div><div class="code" style="left:119.6px;top:909px"><span style="color:#a9b7c6">        </span><span style="color:#808080">// <span class="cj">返回订单编号</span></span></div><div class="ln" style="left:0px;top:945px;width:37.5px;color:#606366">47</div><div class="code" style="left:119.6px;top:945px"><span style="color:#a9b7c6">        </span><span style="color:#cc7832">return</span><span style="color:#a9b7c6"> </span><span style="color:#a9b7c6">order</span><span style="color:#a9b7c6">.</span><span style="color:#a9b7c6">getId</span><span style="color:#a9b7c6">()</span><span style="color:#cc7832">;</span></div><div class="ln" style="left:0px;top:981px;width:37.5px;color:#606366">48</div><div class="code" style="left:119.6px;top:981px"><span style="color:#a9b7c6">    }</span></div><div class="ln" style="left:0px;top:1017px;width:37.5px;color:#606366">49</div></div>
<div style="left:2042px;top:1075px;width:1179px;height:2px;background:#3a3c3e;"></div>
<div style="left:2042px;top:1077px;width:1179px;height:46px;background:#313335;"></div>
<div class="ui crumb" style="left:2172px;top:1079px;display:flex;align-items:center">OrderServiceImpl<svg style="position:static;margin-left:24px;margin-right:17px" width="8" height="14" viewBox="0 0 8 14"><path d="M1 1 L7 7 L1 13" fill="none" stroke="#6e7276" stroke-width="1.6"/></svg>accountService</div>
<div style="left:864px;top:1124px;width:1176px;height:54px;background:#3c3f41;"></div>
<div style="left:864px;top:1124px;width:352px;height:48px;background:#4e5254;"></div>
<div style="left:864px;top:1172px;width:354px;height:6px;background:#737880;"></div>
<div style="left:1216px;top:1124px;width:2px;height:48px;background:#323436;"></div>
<svg style="left:882px;top:1135px" width="28" height="28" viewBox="0 0 28 28"><circle cx="14" cy="14" r="14" fill="#4290ab"/><path d="M18.3 10.2 A5.6 5.6 0 1 0 18.3 17.8" fill="none" stroke="#263238" stroke-width="2"/></svg>
<div class="ui" style="left:920px;top:1130px;font-size:23px;color:#6897bb;line-height:38px">AccountServiceImpl.java</div>
<svg style="left:1185px;top:1141px" width="16" height="16" viewBox="0 0 16 16"><path d="M1 1 L15 15 M15 1 L1 15" stroke="#75787b" stroke-width="1.8"/></svg>
<div style="left:864px;top:1178px;width:1176px;height:731px;background:#2b2b2b;"></div>
<div style="left:864px;top:1178px;width:111px;height:731px;background:#313335;"></div>
<div style="left:864px;top:1178px;width:1176px;height:731px;overflow:hidden"><div class="ln" style="left:0px;top:-21px;width:37.5px;color:#606366">18</div><div class="ln" style="left:0px;top:15px;width:37.5px;color:#606366">19</div><div class="code" style="left:119.6px;top:15px"><span style="color:#a9b7c6">    </span><span style="color:#bbb529">@Override</span></div><div style="left:111px;top:48px;width:1065px;height:36px;background:#323232"></div><div class="ln" style="left:0px;top:51px;width:37.5px;color:#a4a3a3">20</div><div class="code" style="left:119.6px;top:51px"><span style="color:#a9b7c6">    </span><span style="color:#bbb529">@</span><span style="color:#bbb529;background:#344134;display:inline-block;height:36px;vertical-align:top;margin-top:-3px;padding-top:3px">Transactional</span><span style="color:#a9b7c6"> </span><span style="color:#808080">// <span class="cj">开启新事物</span></span></div><div class="ln" style="left:0px;top:87px;width:37.5px;color:#606366">21</div><div class="code" style="left:119.6px;top:87px"><span style="color:#a9b7c6">    </span><span style="color:#cc7832">public</span><span style="color:#a9b7c6"> </span><span style="color:#cc7832">void</span><span style="color:#a9b7c6"> </span><span style="color:#ffc66d">reduceBalance</span><span style="color:#a9b7c6">(</span><span style="color:#a9b7c6">Long</span><span style="color:#a9b7c6"> </span><span style="color:#a9b7c6">userId</span><span style="color:#cc7832">,</span><span style="color:#a9b7c6"> </span><span style="color:#a9b7c6">Integer</span><span style="color:#a9b7c6"> </span><span style="color:#a9b7c6">price</span><span style="color:#a9b7c6">) </span><span style="color:#cc7832">throws</span><span style="color:#a9b7c6"> </span><span style="color:#a9b7c6">Exception</span></div><div class="code" style="left:119.6px;top:123px"><span style="color:#a9b7c6">  {</span></div><div class="ln" style="left:0px;top:159px;width:37.5px;color:#606366">22</div><div class="code" style="left:119.6px;top:159px"><span style="color:#a9b7c6">        </span><span style="color:#9876aa">logger</span><span style="color:#a9b7c6">.</span><span style="color:#a9b7c6">info</span><span style="color:#a9b7c6">(</span><span style="color:#6a8759">"[reduceBalance] <span class="cj">当前</span> XID: {}"</span><span style="color:#cc7832">,</span><span style="color:#a9b7c6"> </span><span style="color:#a9b7c6">RootContext</span><span style="color:#a9b7c6">.</span><span style="color:#a9b7c6;font-style:italic">getXID</span><span style="color:#a9b7c6">())</span><span style="color:#cc7832">;</span></div><div class="ln" style="left:0px;top:195px;width:37.5px;color:#606366">23</div><div class="ln" style="left:0px;top:231px;width:37.5px;color:#606366">24</div><div class="code" style="left:119.6px;top:231px"><span style="color:#a9b7c6">        </span><span style="color:#808080">// <span class="cj">检查余额</span></span></div><div class="ln" style="left:0px;top:267px;width:37.5px;color:#606366">25</div><div class="code" style="left:119.6px;top:267px"><span style="color:#a9b7c6">        </span><span style="color:#a9b7c6">checkBalance</span><span style="color:#a9b7c6">(</span><span style="color:#a9b7c6">userId</span><span style="color:#cc7832">,</span><span style="color:#a9b7c6"> </span><span style="color:#a9b7c6">price</span><span style="color:#a9b7c6">)</span><span style="color:#cc7832">;</span></div><div class="ln" style="left:0px;top:303px;width:37.5px;color:#606366">26</div><div class="ln" style="left:0px;top:339px;width:37.5px;color:#606366">27</div><div class="code" style="left:119.6px;top:339px"><span style="color:#a9b7c6">        </span><span style="color:#9876aa">logger</span><span style="color:#a9b7c6">.</span><span style="color:#a9b7c6">info</span><span style="color:#a9b7c6">(</span><span style="color:#6a8759">"[reduceBalance] <span class="cj">开始扣减用户</span> {} <span class="cj">余额</span>"</span><span style="color:#cc7832">,</span><span style="color:#a9b7c6"> </span><span style="color:#a9b7c6">userId</span><span style="color:#a9b7c6">)</span><span style="color:#cc7832">;</span></div><div class="ln" style="left:0px;top:375px;width:37.5px;color:#606366">28</div><div class="code" style="left:119.6px;top:375px"><span style="color:#a9b7c6">        </span><span style="color:#808080">// <span class="cj">扣除余额</span></span></div><div class="ln" style="left:0px;top:411px;width:37.5px;color:#606366">29</div><div class="code" style="left:119.6px;top:411px"><span style="color:#a9b7c6">        </span><span style="color:#cc7832">int</span><span style="color:#a9b7c6"> </span><span style="color:#a9b7c6">updateCount</span><span style="color:#a9b7c6"> = </span><span style="color:#9876aa">accountDao</span><span style="color:#a9b7c6">.</span><span style="color:#a9b7c6">reduceBalance</span><span style="color:#a9b7c6">(</span><span style="color:#a9b7c6">price</span><span style="color:#a9b7c6">)</span><span style="color:#cc7832">;</span></div><div class="ln" style="left:0px;top:447px;width:37.5px;color:#606366">30</div><div class="code" style="left:119.6px;top:447px"><span style="color:#a9b7c6">        </span><span style="color:#808080">// <span class="cj">扣除成功</span></span></div><div class="ln" style="left:0px;top:483px;width:37.5px;color:#606366">31</div><div class="code" style="left:119.6px;top:483px"><span style="color:#a9b7c6">        </span><span style="color:#cc7832">if</span><span style="color:#a9b7c6"> (</span><span style="color:#a9b7c6">updateCount</span><span style="color:#a9b7c6"> == </span><span style="color:#6897bb">0</span><span style="color:#a9b7c6">) {</span></div><div class="ln" style="left:0px;top:519px;width:37.5px;color:#606366">32</div><div class="code" style="left:119.6px;top:519px"><span style="color:#a9b7c6">            </span><span style="color:#9876aa">logger</span><span style="color:#a9b7c6">.</span><span style="color:#a9b7c6">warn</span><span style="color:#a9b7c6">(</span><span style="color:#6a8759">"[reduceBalance] <span class="cj">扣除用户</span> {} <span class="cj">余额失败</span>"</span><span style="color:#cc7832">,</span><span style="color:#a9b7c6"> </span><span style="color:#a9b7c6">userId</span><span style="color:#a9b7c6">)</span><span style="color:#cc7832">;</span></div><div class="ln" style="left:0px;top:555px;width:37.5px;color:#606366">33</div><div class="code" style="left:119.6px;top:555px"><span style="color:#a9b7c6">            </span><span style="color:#cc7832">throw</span><span style="color:#a9b7c6"> </span><span style="color:#cc7832">new</span><span style="color:#a9b7c6"> </span><span style="color:#a9b7c6">Exception</span><span style="color:#a9b7c6">(</span><span style="color:#6a8759">"<span class="cj">余额不足</span>"</span><span style="color:#a9b7c6">)</span><span style="color:#cc7832">;</span></div><div class="ln" style="left:0px;top:591px;width:37.5px;color:#606366">34</div><div class="code" style="left:119.6px;top:591px"><span style="color:#a9b7c6">        }</span></div><div class="ln" style="left:0px;top:627px;width:37.5px;color:#606366">35</div><div class="code" style="left:119.6px;top:627px"><span style="color:#a9b7c6">        </span><span style="color:#9876aa">logger</span><span style="color:#a9b7c6">.</span><span style="color:#a9b7c6">info</span><span style="color:#a9b7c6">(</span><span style="color:#6a8759">"[reduceBalance] <span class="cj">扣除用户</span> {} <span class="cj">余额成功</span>"</span><span style="color:#cc7832">,</span><span style="color:#a9b7c6"> </span><span style="color:#a9b7c6">userId</span><span style="color:#a9b7c6">)</span><span style="color:#cc7832">;</span></div><div class="ln" style="left:0px;top:663px;width:37.5px;color:#606366">36</div><div class="code" style="left:119.6px;top:663px"><span style="color:#a9b7c6">    }</span></div><div class="ln" style="left:0px;top:699px;width:37.5px;color:#606366">37</div></div>
<div style="left:864px;top:1909px;width:1176px;height:2px;background:#3a3c3e;"></div>
<div style="left:864px;top:1911px;width:1176px;height:46px;background:#313335;"></div>
<div class="ui crumb" style="left:994px;top:1910px;display:flex;align-items:center">AccountServiceImpl<svg style="position:static;margin-left:24px;margin-right:17px" width="8" height="14" viewBox="0 0 8 14"><path d="M1 1 L7 7 L1 13" fill="none" stroke="#6e7276" stroke-width="1.6"/></svg>reduceBalance()</div>
<div style="left:2040px;top:1123px;width:2px;height:845px;background:#2b2b2b;"></div>
<div style="left:2042px;top:1124px;width:1179px;height:54px;background:#3c3f41;"></div>
<div style="left:2042px;top:1124px;width:350px;height:48px;background:#4e5254;"></div>
<div style="left:2042px;top:1172px;width:352px;height:6px;background:#737880;"></div>
<div style="left:2392px;top:1124px;width:2px;height:48px;background:#323436;"></div>
<svg style="left:2060px;top:1135px" width="28" height="28" viewBox="0 0 28 28"><circle cx="14" cy="14" r="14" fill="#4290ab"/><path d="M18.3 10.2 A5.6 5.6 0 1 0 18.3 17.8" fill="none" stroke="#263238" stroke-width="2"/></svg>
<div class="ui" style="left:2098px;top:1130px;font-size:23px;color:#6897bb;line-height:38px">ProductServiceImpl.java</div>
<svg style="left:2361px;top:1141px" width="16" height="16" viewBox="0 0 16 16"><path d="M1 1 L15 15 M15 1 L1 15" stroke="#75787b" stroke-width="1.8"/></svg>
<div style="left:2042px;top:1178px;width:1179px;height:731px;background:#2b2b2b;"></div>
<div style="left:2042px;top:1178px;width:111px;height:731px;background:#313335;"></div>
<div style="left:2042px;top:1178px;width:1179px;height:731px;overflow:hidden"><div class="ln" style="left:0px;top:-21px;width:37.5px;color:#606366">18</div><div class="ln" style="left:0px;top:15px;width:37.5px;color:#606366">19</div><div class="code" style="left:119.6px;top:15px"><span style="color:#a9b7c6">    </span><span style="color:#bbb529">@Override</span></div><div style="left:111px;top:48px;width:1068px;height:36px;background:#323232"></div><div class="ln" style="left:0px;top:51px;width:37.5px;color:#a4a3a3">20</div><div class="code" style="left:119.6px;top:51px"><span style="color:#a9b7c6">    </span><span style="color:#bbb529">@</span><span style="color:#bbb529;background:#344134;display:inline-block;height:36px;vertical-align:top;margin-top:-3px;padding-top:3px">Transactional</span><span style="color:#a9b7c6"> </span><span style="color:#808080">// <span class="cj">开启新事物</span></span></div><div class="ln" style="left:0px;top:87px;width:37.5px;color:#606366">21</div><div class="code" style="left:119.6px;top:87px"><span style="color:#a9b7c6">    </span><span style="color:#cc7832">public</span><span style="color:#a9b7c6"> </span><span style="color:#cc7832">void</span><span style="color:#a9b7c6"> </span><span style="color:#ffc66d">reduceStock</span><span style="color:#a9b7c6">(</span><span style="color:#a9b7c6">Long</span><span style="color:#a9b7c6"> </span><span style="color:#a9b7c6">productId</span><span style="color:#cc7832">,</span><span style="color:#a9b7c6"> </span><span style="color:#a9b7c6">Integer</span><span style="color:#a9b7c6"> </span><span style="color:#a9b7c6">amount</span><span style="color:#a9b7c6">) </span><span style="color:#cc7832">throws</span></div><div class="code" style="left:119.6px;top:123px"><span style="color:#a9b7c6"> </span><span style="color:#a9b7c6">Exception</span><span style="color:#a9b7c6"> {</span></div><div class="ln" style="left:0px;top:159px;width:37.5px;color:#606366">22</div><div class="code" style="left:119.6px;top:159px"><span style="color:#a9b7c6">        </span><span style="color:#9876aa">logger</span><span style="color:#a9b7c6">.</span><span style="color:#a9b7c6">info</span><span style="color:#a9b7c6">(</span><span style="color:#6a8759">"[reduceStock] <span class="cj">当前</span> XID: {}"</span><span style="color:#cc7832">,</span><span style="color:#a9b7c6"> </span><span style="color:#a9b7c6">RootContext</span><span style="color:#a9b7c6">.</span><span style="color:#a9b7c6;font-style:italic">getXID</span><span style="color:#a9b7c6">())</span><span style="color:#cc7832">;</span></div><div class="ln" style="left:0px;top:195px;width:37.5px;color:#606366">23</div><div class="ln" style="left:0px;top:231px;width:37.5px;color:#606366">24</div><div class="code" style="left:119.6px;top:231px"><span style="color:#a9b7c6">        </span><span style="color:#808080">// <span class="cj">检查库存</span></span></div><div class="ln" style="left:0px;top:267px;width:37.5px;color:#606366">25</div><div class="code" style="left:119.6px;top:267px"><span style="color:#a9b7c6">        </span><span style="color:#a9b7c6">checkStock</span><span style="color:#a9b7c6">(</span><span style="color:#a9b7c6">productId</span><span style="color:#cc7832">,</span><span style="color:#a9b7c6"> </span><span style="color:#a9b7c6">amount</span><span style="color:#a9b7c6">)</span><span style="color:#cc7832">;</span></div><div class="ln" style="left:0px;top:303px;width:37.5px;color:#606366">26</div><div class="ln" style="left:0px;top:339px;width:37.5px;color:#606366">27</div><div class="code" style="left:119.6px;top:339px"><span style="color:#a9b7c6">        </span><span style="color:#9876aa">logger</span><span style="color:#a9b7c6">.</span><span style="color:#a9b7c6">info</span><span style="color:#a9b7c6">(</span><span style="color:#6a8759">"[reduceStock] <span class="cj">开始扣减</span> {} <span class="cj">库存</span>"</span><span style="color:#cc7832">,</span><span style="color:#a9b7c6"> </span><span style="color:#a9b7c6">productId</span><span style="color:#a9b7c6">)</span><span style="color:#cc7832">;</span></div><div class="ln" style="left:0px;top:375px;width:37.5px;color:#606366">28</div><div class="code" style="left:119.6px;top:375px"><span style="color:#a9b7c6">        </span><span style="color:#808080">// <span class="cj">扣减库存</span></span></div><div class="ln" style="left:0px;top:411px;width:37.5px;color:#606366">29</div><div class="code" style="left:119.6px;top:411px"><span style="color:#a9b7c6">        </span><span style="color:#cc7832">int</span><span style="color:#a9b7c6"> </span><span style="color:#a9b7c6">updateCount</span><span style="color:#a9b7c6"> = </span><span style="color:#9876aa">productDao</span><span style="color:#a9b7c6">.</span><span style="color:#a9b7c6">reduceStock</span><span style="color:#a9b7c6">(</span><span style="color:#a9b7c6">productId</span><span style="color:#cc7832">,</span><span style="color:#a9b7c6"> </span><span style="color:#a9b7c6">amount</span><span style="color:#a9b7c6">)</span><span style="color:#cc7832">;</span></div><div class="ln" style="left:0px;top:447px;width:37.5px;color:#606366">30</div><div class="code" style="left:119.6px;top:447px"><span style="color:#a9b7c6">        </span><span style="color:#808080">// <span class="cj">扣除成功</span></span></div><div class="ln" style="left:0px;top:483px;width:37.5px;color:#606366">31</div><div class="code" style="left:119.6px;top:483px"><span style="color:#a9b7c6">        </span><span style="color:#cc7832">if</span><span style="color:#a9b7c6"> (</span><span style="color:#a9b7c6">updateCount</span><span style="color:#a9b7c6"> == </span><span style="color:#6897bb">0</span><span style="color:#a9b7c6">) {</span></div><div class="ln" style="left:0px;top:519px;width:37.5px;color:#606366">32</div><div class="code" style="left:119.6px;top:519px"><span style="color:#a9b7c6">            </span><span style="color:#9876aa">logger</span><span style="color:#a9b7c6">.</span><span style="color:#a9b7c6">warn</span><span style="color:#a9b7c6">(</span><span style="color:#6a8759">"[reduceStock] <span class="cj">扣除</span> {} <span class="cj">库存失败</span>"</span><span style="color:#cc7832">,</span><span style="color:#a9b7c6"> </span><span style="color:#a9b7c6">productId</span><span style="color:#a9b7c6">)</span><span style="color:#cc7832">;</span></div><div class="ln" style="left:0px;top:555px;width:37.5px;color:#606366">33</div><div class="code" style="left:119.6px;top:555px"><span style="color:#a9b7c6">            </span><span style="color:#cc7832">throw</span><span style="color:#a9b7c6"> </span><span style="color:#cc7832">new</span><span style="color:#a9b7c6"> </span><span style="color:#a9b7c6">Exception</span><span style="color:#a9b7c6">(</span><span style="color:#6a8759">"<span class="cj">库存不足</span>"</span><span style="color:#a9b7c6">)</span><span style="color:#cc7832">;</span></div><div class="ln" style="left:0px;top:591px;width:37.5px;color:#606366">34</div><div class="code" style="left:119.6px;top:591px"><span style="color:#a9b7c6">        }</span></div><div class="ln" style="left:0px;top:627px;width:37.5px;color:#606366">35</div><div class="code" style="left:119.6px;top:627px"><span style="color:#a9b7c6">        </span><span style="color:#808080">// <span class="cj">扣除失败</span></span></div><div class="ln" style="left:0px;top:663px;width:37.5px;color:#606366">36</div><div class="code" style="left:119.6px;top:663px"><span style="color:#a9b7c6">        </span><span style="color:#9876aa">logger</span><span style="color:#a9b7c6">.</span><span style="color:#a9b7c6">info</span><span style="color:#a9b7c6">(</span><span style="color:#6a8759">"[reduceStock] <span class="cj">扣除</span> {} <span class="cj">库存成功</span>"</span><span style="color:#cc7832">,</span><span style="color:#a9b7c6"> </span><span style="color:#a9b7c6">productId</span><span style="color:#a9b7c6">)</span><span style="color:#cc7832">;</span></div><div class="ln" style="left:0px;top:699px;width:37.5px;color:#606366">37</div><div class="code" style="left:119.6px;top:699px"><span style="color:#a9b7c6">    }</span></div></div>
<div style="left:2042px;top:1909px;width:1179px;height:2px;background:#3a3c3e;"></div>
<div style="left:2042px;top:1911px;width:1179px;height:46px;background:#313335;"></div>
<div class="ui crumb" style="left:2172px;top:1910px;display:flex;align-items:center">ProductServiceImpl<svg style="position:static;margin-left:24px;margin-right:17px" width="8" height="14" viewBox="0 0 8 14"><path d="M1 1 L7 7 L1 13" fill="none" stroke="#6e7276" stroke-width="1.6"/></svg>reduceStock()</div>
<div style="left:3221px;top:0px;width:39px;height:1953px;background:#3c3f41;"></div>
<div style="left:3221px;top:0px;width:1px;height:1953px;background:#2b2b2b;"></div>
<div class="ui" style="left:3254px;top:50px;font-size:23px;color:#bbbbbb;line-height:26px;transform:rotate(90deg);transform-origin:0 0">Database</div>
<div class="ui" style="left:3254px;top:225px;font-size:23px;color:#bbbbbb;line-height:26px;transform:rotate(90deg);transform-origin:0 0">Bean Validation</div>
<div class="ui" style="left:3254px;top:464px;font-size:23px;color:#bbbbbb;line-height:26px;transform:rotate(90deg);transform-origin:0 0">Maven</div>
<div class="ui" style="left:3254px;top:1844px;font-size:23px;color:#bbbbbb;line-height:26px;transform:rotate(90deg);transform-origin:0 0">leetcode</div>
<div style="left:973px;top:50px;width:2px;height:1025px;background:#5e6063"></div>
<svg style="left:965px;top:119px" width="18" height="18" viewBox="0 0 18 18"><rect x="1" y="1" width="16" height="16" fill="#2b2b2b" stroke="#5e6063" stroke-width="2"/><rect x="5" y="8" width="8" height="2" fill="#5e6063"/><rect x="8" y="5" width="2" height="8" fill="#5e6063"/></svg>
<svg style="left:965px;top:191px" width="18" height="22" viewBox="0 0 18 22"><path d="M1 1 H17 V13 L9 20 L1 13 Z" fill="#2b2b2b" stroke="#5e6063" stroke-width="2"/><rect x="5" y="7" width="8" height="2" fill="#5e6063"/></svg>
<svg style="left:965px;top:224px" width="18" height="22" viewBox="0 0 18 22"><path d="M9 1 L17 8 V20 H1 V8 Z" fill="#2b2b2b" stroke="#5e6063" stroke-width="2"/><rect x="5" y="12" width="8" height="2" fill="#5e6063"/></svg>
<svg style="left:965px;top:659px" width="18" height="22" viewBox="0 0 18 22"><path d="M1 1 H17 V13 L9 20 L1 13 Z" fill="#2b2b2b" stroke="#5e6063" stroke-width="2"/><rect x="5" y="7" width="8" height="2" fill="#5e6063"/></svg>
<svg style="left:965px;top:800px" width="18" height="22" viewBox="0 0 18 22"><path d="M9 1 L17 8 V20 H1 V8 Z" fill="#2b2b2b" stroke="#5e6063" stroke-width="2"/><rect x="5" y="12" width="8" height="2" fill="#5e6063"/></svg>
<svg style="left:914px;top:254px" width="28" height="28" viewBox="0 0 28 28"><ellipse cx="12" cy="13" rx="9.5" ry="12.5" transform="rotate(-45 12 13)" fill="#59983f"/><path d="M3.5 4.5 L13 14" stroke="#313335" stroke-width="2.6"/><circle cx="17" cy="19" r="8.6" fill="#313335"/><circle cx="17" cy="19" r="7.3" fill="#3b87a3"/><path d="M19.6 16.6 A3.3 3.3 0 1 0 19.6 21.4" fill="none" stroke="#24292b" stroke-width="1.6"/></svg>
<div style="left:1043.5px;top:574px;width:2px;height:72px;background:#373737"></div>
<div style="left:1043.5px;top:682px;width:2px;height:36px;background:#373737"></div>
<div style="left:1043.5px;top:754px;width:2px;height:36px;background:#373737"></div>
<div style="left:2016px;top:54px;width:20px;height:20px;background:#c7a022"></div><div style="left:2012px;top:149px;width:28px;height:5px;background:#1f7a1f"></div><div style="left:2012px;top:411px;width:28px;height:5px;background:#1f7a1f"></div><div style="left:2012px;top:445px;width:28px;height:5px;background:#c7a022"></div><div style="left:2019px;top:99px;width:15px;height:936px;background:rgba(110,112,114,0.45);border-radius:8px"></div>
<div style="left:2134px;top:50px;width:2px;height:1025px;background:#4f7d77"></div>
<div style="left:2151px;top:50px;width:2px;height:1025px;background:#5e6063"></div>
<svg style="left:2135px;top:121px" width="18" height="14" viewBox="0 0 18 14"><path d="M0 0 L16 6.5 L0 13 Z" fill="#6f7a84"/></svg>
<svg style="left:2143px;top:249px" width="18" height="22" viewBox="0 0 18 22"><path d="M1 1 H17 V13 L9 20 L1 13 Z" fill="#2b2b2b" stroke="#5e6063" stroke-width="2"/><rect x="5" y="7" width="8" height="2" fill="#5e6063"/></svg>
<svg style="left:2143px;top:282px" width="18" height="22" viewBox="0 0 18 22"><path d="M9 1 L17 8 V20 H1 V8 Z" fill="#2b2b2b" stroke="#5e6063" stroke-width="2"/><rect x="5" y="12" width="8" height="2" fill="#5e6063"/></svg>
<svg style="left:2143px;top:357px" width="18" height="22" viewBox="0 0 18 22"><path d="M1 1 H17 V13 L9 20 L1 13 Z" fill="#2b2b2b" stroke="#5e6063" stroke-width="2"/><rect x="5" y="7" width="8" height="2" fill="#5e6063"/></svg>
<svg style="left:2143px;top:1038px" width="18" height="22" viewBox="0 0 18 22"><path d="M9 1 L17 8 V20 H1 V8 Z" fill="#2b2b2b" stroke="#5e6063" stroke-width="2"/><rect x="5" y="12" width="8" height="2" fill="#5e6063"/></svg>
<svg style="left:2093px;top:312px" width="30" height="30" viewBox="0 0 30 30"><circle cx="9" cy="14" r="8.1" fill="#59983f"/><path d="M6.5 9.5 H11.5 M9 9.5 V18.5 M6.5 18.5 H11.5" stroke="#2a3a22" stroke-width="2.2"/><rect x="18" y="8" width="2.2" height="18" fill="#db5c5c"/><path d="M15 9 L19.1 2 L23.2 9 Z" fill="#db5c5c"/></svg>
<div style="left:2221.7px;top:380px;width:2px;height:432px;background:#373737"></div>
<div style="left:2221.7px;top:848px;width:2px;height:180px;background:#373737"></div>
<div style="left:3196px;top:55px;width:20px;height:20px;background:#c7a022"></div><div style="left:3192px;top:268px;width:28px;height:6px;background:#c7a022"></div><div style="left:3192px;top:350px;width:28px;height:6px;background:#c7a022"></div><div style="left:3192px;top:391px;width:28px;height:6px;background:#c7a022"></div><div style="left:3182px;top:368px;width:6px;height:13px;background:#6e7f8c"></div><div style="left:3200px;top:331px;width:15px;height:581px;background:rgba(110,112,114,0.45);border-radius:8px"></div>
<div style="left:973px;top:1178px;width:2px;height:731px;background:#5e6063"></div>
<div style="left:958px;top:1226px;width:16px;height:36px;background:#2e3b45"></div>
<svg style="left:965px;top:1203px" width="18" height="22" viewBox="0 0 18 22"><path d="M1 1 H17 V13 L9 20 L1 13 Z" fill="#2b2b2b" stroke="#5e6063" stroke-width="2"/><rect x="5" y="7" width="8" height="2" fill="#5e6063"/></svg>
<svg style="left:965px;top:1236px" width="18" height="22" viewBox="0 0 18 22"><path d="M9 1 L17 8 V20 H1 V8 Z" fill="#2b2b2b" stroke="#5e6063" stroke-width="2"/><rect x="5" y="12" width="8" height="2" fill="#5e6063"/></svg>
<svg style="left:965px;top:1311px" width="18" height="22" viewBox="0 0 18 22"><path d="M1 1 H17 V13 L9 20 L1 13 Z" fill="#2b2b2b" stroke="#5e6063" stroke-width="2"/><rect x="5" y="7" width="8" height="2" fill="#5e6063"/></svg>
<svg style="left:965px;top:1671px" width="18" height="22" viewBox="0 0 18 22"><path d="M1 1 H17 V13 L9 20 L1 13 Z" fill="#2b2b2b" stroke="#5e6063" stroke-width="2"/><rect x="5" y="7" width="8" height="2" fill="#5e6063"/></svg>
<svg style="left:965px;top:1776px" width="18" height="22" viewBox="0 0 18 22"><path d="M9 1 L17 8 V20 H1 V8 Z" fill="#2b2b2b" stroke="#5e6063" stroke-width="2"/><rect x="5" y="12" width="8" height="2" fill="#5e6063"/></svg>
<svg style="left:965px;top:1848px" width="18" height="22" viewBox="0 0 18 22"><path d="M9 1 L17 8 V20 H1 V8 Z" fill="#2b2b2b" stroke="#5e6063" stroke-width="2"/><rect x="5" y="12" width="8" height="2" fill="#5e6063"/></svg>
<svg style="left:915px;top:1266px" width="30" height="30" viewBox="0 0 30 30"><circle cx="9" cy="14" r="8.1" fill="#59983f"/><path d="M6.5 9.5 H11.5 M9 9.5 V18.5 M6.5 18.5 H11.5" stroke="#2a3a22" stroke-width="2.2"/><rect x="18" y="8" width="2.2" height="18" fill="#db5c5c"/><path d="M15 9 L19.1 2 L23.2 9 Z" fill="#db5c5c"/></svg>
<div style="left:1043.5px;top:1334px;width:2px;height:504px;background:#373737"></div>
<div style="left:1099.5px;top:1694px;width:2px;height:72px;background:#373737"></div>
<div style="left:2016px;top:1182px;width:20px;height:20px;background:#c7a022"></div><div style="left:2002px;top:1234px;width:6px;height:13px;background:#6e7f8c"></div><div style="left:2012px;top:1236px;width:28px;height:6px;background:#1f7a1f"></div><div style="left:2012px;top:1334px;width:28px;height:6px;background:#c7a022"></div><div style="left:2002px;top:1387px;width:6px;height:14px;background:#4a88c7"></div><div style="left:2012px;top:1390px;width:28px;height:6px;background:#1f7a1f"></div><div style="left:2019px;top:1378px;width:15px;height:272px;background:rgba(110,112,114,0.45);border-radius:8px"></div>
<div style="left:2151px;top:1178px;width:2px;height:731px;background:#5e6063"></div>
<div style="left:2136px;top:1226px;width:16px;height:36px;background:#2e3b45"></div>
<svg style="left:2143px;top:1203px" width="18" height="22" viewBox="0 0 18 22"><path d="M1 1 H17 V13 L9 20 L1 13 Z" fill="#2b2b2b" stroke="#5e6063" stroke-width="2"/><rect x="5" y="7" width="8" height="2" fill="#5e6063"/></svg>
<svg style="left:2143px;top:1236px" width="18" height="22" viewBox="0 0 18 22"><path d="M9 1 L17 8 V20 H1 V8 Z" fill="#2b2b2b" stroke="#5e6063" stroke-width="2"/><rect x="5" y="12" width="8" height="2" fill="#5e6063"/></svg>
<svg style="left:2143px;top:1311px" width="18" height="22" viewBox="0 0 18 22"><path d="M1 1 H17 V13 L9 20 L1 13 Z" fill="#2b2b2b" stroke="#5e6063" stroke-width="2"/><rect x="5" y="7" width="8" height="2" fill="#5e6063"/></svg>
<svg style="left:2143px;top:1671px" width="18" height="22" viewBox="0 0 18 22"><path d="M1 1 H17 V13 L9 20 L1 13 Z" fill="#2b2b2b" stroke="#5e6063" stroke-width="2"/><rect x="5" y="7" width="8" height="2" fill="#5e6063"/></svg>
<svg style="left:2143px;top:1776px" width="18" height="22" viewBox="0 0 18 22"><path d="M9 1 L17 8 V20 H1 V8 Z" fill="#2b2b2b" stroke="#5e6063" stroke-width="2"/><rect x="5" y="12" width="8" height="2" fill="#5e6063"/></svg>
<svg style="left:2143px;top:1884px" width="18" height="22" viewBox="0 0 18 22"><path d="M9 1 L17 8 V20 H1 V8 Z" fill="#2b2b2b" stroke="#5e6063" stroke-width="2"/><rect x="5" y="12" width="8" height="2" fill="#5e6063"/></svg>
<svg style="left:2093px;top:1266px" width="30" height="30" viewBox="0 0 30 30"><circle cx="9" cy="14" r="8.1" fill="#59983f"/><path d="M6.5 9.5 H11.5 M9 9.5 V18.5 M6.5 18.5 H11.5" stroke="#2a3a22" stroke-width="2.2"/><rect x="18" y="8" width="2.2" height="18" fill="#db5c5c"/><path d="M15 9 L19.1 2 L23.2 9 Z" fill="#db5c5c"/></svg>
<div style="left:2221.7px;top:1334px;width:2px;height:540px;background:#373737"></div>
<div style="left:2277.7px;top:1694px;width:2px;height:72px;background:#373737"></div>
<div style="left:3196px;top:1182px;width:20px;height:20px;background:#c7a022"></div><div style="left:3182px;top:1234px;width:6px;height:13px;background:#6e7f8c"></div><div style="left:3192px;top:1236px;width:28px;height:6px;background:#1f7a1f"></div><div style="left:3192px;top:1332px;width:28px;height:6px;background:#c7a022"></div><div style="left:3182px;top:1384px;width:6px;height:14px;background:#4a88c7"></div><div style="left:3192px;top:1385px;width:28px;height:6px;background:#1f7a1f"></div><div style="left:3200px;top:1376px;width:15px;height:267px;background:rgba(110,112,114,0.45);border-radius:8px"></div>
<svg style="left:3229px;top:15px" width="25" height="27" viewBox="0 0 25 27"><ellipse cx="12.5" cy="19.5" rx="11" ry="6" fill="#afb1b3"/><ellipse cx="12.5" cy="15.5" rx="11.6" ry="6.2" fill="#3c3f41"/><ellipse cx="12.5" cy="14.5" rx="11" ry="6" fill="#afb1b3"/><ellipse cx="12.5" cy="10.5" rx="11.6" ry="6.2" fill="#3c3f41"/><ellipse cx="12.5" cy="9.5" rx="11" ry="6" fill="#afb1b3"/><ellipse cx="12.5" cy="6.8" rx="11.6" ry="5.4" fill="#3c3f41"/><ellipse cx="12.5" cy="5.6" rx="11" ry="3.8" fill="#afb1b3"/></svg>
<svg style="left:3229px;top:192px" width="26" height="27" viewBox="0 0 26 27"><ellipse cx="11" cy="12" rx="10" ry="11.5" transform="rotate(-40 11 12)" fill="#afb1b3"/><path d="M3 3 L15 14" stroke="#3c3f41" stroke-width="2.8"/><path d="M7 19 L15 26 L25 14" fill="none" stroke="#3c3f41" stroke-width="6"/><path d="M9 20 L15 25.5 L24 15" fill="none" stroke="#afb1b3" stroke-width="3"/></svg>
<div style="left:3229px;top:427px;font:italic bold 29px 'Liberation Sans';color:#afb1b3;line-height:34px;letter-spacing:-1px">m</div>
<svg style="left:3228px;top:1808px" width="26" height="28" viewBox="0 0 26 28"><path d="M13.5 1.5 L4 13 L12 24" fill="none" stroke="#0d0d0d" stroke-width="3.2" stroke-linecap="round"/><path d="M11.5 6.5 Q16 8 17.5 12" fill="none" stroke="#e8a33a" stroke-width="3.2" stroke-linecap="round"/><path d="M11 23.5 Q16 22 17.5 18.5" fill="none" stroke="#e8a33a" stroke-width="3.2" stroke-linecap="round"/><rect x="10" y="13.5" width="13" height="3" fill="#b3b3b3"/></svg>
<div style="left:0px;top:1952px;width:3260px;height:2px;background:#2b2b2b;"></div>
<div style="left:0px;top:1954px;width:3260px;height:14px;background:#3c3f41;"></div>
<div class="ui" style="left:-3px;top:1959px;font-size:24px;color:#bbbbbb;line-height:30px">5: Debug</div>
<div class="ui" style="left:173px;top:1959px;font-size:24px;color:#bbbbbb;line-height:30px">4: Run</div>
<div class="ui" style="left:306px;top:1959px;font-size:24px;color:#bbbbbb;line-height:30px">6: TODO</div>
<div class="ui" style="left:469px;top:1959px;font-size:24px;color:#bbbbbb;line-height:30px">Spring</div>
<div class="ui" style="left:609px;top:1959px;font-size:24px;color:#bbbbbb;line-height:30px">Statistic</div>
<div class="ui" style="left:762px;top:1959px;font-size:24px;color:#bbbbbb;line-height:30px">Terminal</div>
<div class="ui" style="left:940px;top:1959px;font-size:24px;color:#bbbbbb;line-height:30px">9: Version Control</div>
<div class="ui" style="left:1209px;top:1959px;font-size:24px;color:#bbbbbb;line-height:30px">Java Enterprise</div>
<div class="ui" style="left:1442px;top:1959px;font-size:24px;color:#bbbbbb;line-height:30px">Build</div>
<div class="ui" style="left:3098px;top:1959px;font-size:24px;color:#bbbbbb;line-height:30px">Event Log</div>
<svg style="left:130px;top:1960px" width="20" height="10" viewBox="0 0 20 10"><path d="M4 2 L16 9 L4 16 Z" fill="#afb1b3"/></svg>
<div style="left:273px;top:1963px;width:20px;height:6px;background:#afb1b3"></div>
<svg style="left:447px;top:1960px" width="22" height="10" viewBox="0 0 22 10"><path d="M20 1 Q8 2 3 10 L10 10 Q14 5 20 1 Z" fill="#6a9955"/></svg>
<svg style="left:580px;top:1961px" width="22" height="10" viewBox="0 0 22 10"><circle cx="11" cy="11" r="9" fill="#4a88c7"/><path d="M11 2 A9 9 0 0 1 20 11 L11 11 Z" fill="#db5c5c"/></svg>
<div style="left:740px;top:1963px;width:22px;height:6px;background:#afb1b3"></div>
<svg style="left:908px;top:1960px" width="24" height="10" viewBox="0 0 24 10"><rect x="3" y="2" width="3" height="8" fill="#afb1b3"/><path d="M12 1 L17 7 H7 Z" fill="#afb1b3"/></svg>
<div style="left:1176px;top:1963px;width:22px;height:6px;background:#afb1b3"></div>
<svg style="left:1410px;top:1960px" width="24" height="10" viewBox="0 0 24 10"><path d="M14 2 Q7 3 5 10" fill="none" stroke="#afb1b3" stroke-width="3"/></svg>
<div style="left:3065px;top:1961px;width:24px;height:24px;background:#499c54;border-radius:12px"></div>
<svg style="left:0;top:0" width="3260" height="1968" viewBox="0 0 3260 1968"><rect x="18" y="82" width="823" height="576" rx="7" ry="7" fill="none" stroke="#ee5125" stroke-width="6"/><rect x="19" y="667" width="829" height="556" rx="7" ry="7" fill="none" stroke="#ee5125" stroke-width="6"/><rect x="25" y="1232" width="817" height="534" rx="7" ry="7" fill="none" stroke="#ee5125" stroke-width="6"/><path d="M1501.7 749.9 L2169.6 359.3 L2173.5 377.0 L2201.7 323.3 L2141.0 322.8 L2154.8 334.6 L1495.3 739.1 Z" fill="#ee5125"/><circle cx="1498.5" cy="744.5" r="6.3" fill="#ee5125"/><path d="M2257.0 697.7 L1439.4 1228.6 L1434.8 1211.1 L1409.0 1266.0 L1469.6 1263.8 L1455.3 1252.6 L2264.0 708.3 Z" fill="#ee5125"/><circle cx="2260.5" cy="703.0" r="6.3" fill="#ee5125"/><path d="M2900.3 595.4 L2472.0 1208.3 L2461.1 1193.8 L2458.0 1254.4 L2513.3 1229.4 L2495.8 1224.5 L2910.7 602.6 Z" fill="#ee5125"/><circle cx="2905.5" cy="599.0" r="6.3" fill="#ee5125"/></svg>
<div style="left:371px;top:188px;font-family:'Liberation Sans',sans-serif;font-size:48px;line-height:52px;color:#ee5125;white-space:pre">账户服务</div>
<div style="left:377px;top:708px;font-family:'Liberation Sans',sans-serif;font-size:48px;line-height:52px;color:#ee5125;white-space:pre">订单服务</div>
<div style="left:381px;top:1282px;font-family:'Liberation Sans',sans-serif;font-size:48px;line-height:52px;color:#ee5125;white-space:pre">商品服务</div></body></html>
